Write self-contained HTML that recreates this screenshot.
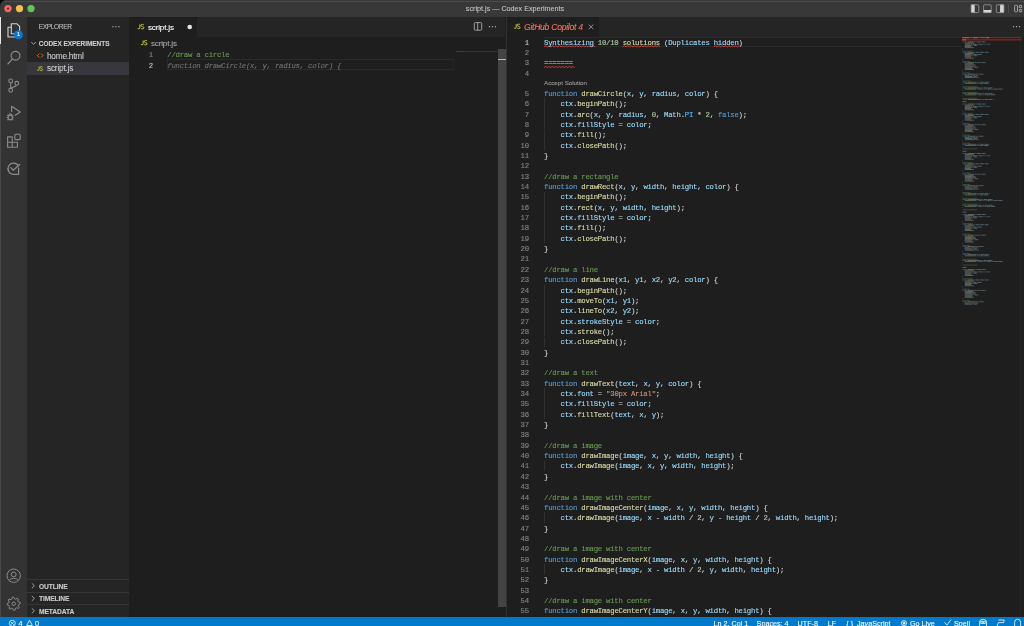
<!DOCTYPE html>
<html><head><meta charset="utf-8"><style>
*{margin:0;padding:0;box-sizing:border-box}
html,body{width:1024px;height:626px;overflow:hidden;background:#1e1e1e}
.a{position:absolute}
#bg,#fg,#ic{position:absolute;left:0;top:0;width:1024px;height:626px}
#fg{will-change:transform}
.t{position:absolute;white-space:pre;font-family:"Liberation Sans",sans-serif;line-height:9px;-webkit-text-stroke:0.1px}
.m{position:absolute;white-space:pre;font-family:"Liberation Mono",monospace;font-size:7.3px;letter-spacing:-0.24px;line-height:10.35px;color:#d4d4d4;-webkit-text-stroke:0.12px}
</style></head><body>
<div id="bg"><div class="a" style="left:0;top:0;width:7px;height:7px;background:#000"></div><div class="a" style="left:0px;top:0px;width:1024px;height:17px;background:#383838;border-top-left-radius:6px"></div><div class="a" style="left:3.5px;top:1px;width:1020.5px;height:1px;background:#4b4b4b;"></div><div class="a" style="left:0px;top:17px;width:27.2px;height:600px;background:#333333;"></div><div class="a" style="left:0px;top:17px;width:1px;height:600px;background:#484848;"></div><div class="a" style="left:0px;top:17.3px;width:1.4px;height:27px;background:#e8e8e8;"></div><div class="a" style="left:27.2px;top:17px;width:101.8px;height:600px;background:#252526;"></div><div class="a" style="left:27.2px;top:62.1px;width:101.8px;height:12.6px;background:#37373d;"></div><div class="a" style="left:27.2px;top:579.3px;width:101.8px;height:0.9px;background:#363636;"></div><div class="a" style="left:27.2px;top:591.9px;width:101.8px;height:0.9px;background:#363636;"></div><div class="a" style="left:27.2px;top:604.3px;width:101.8px;height:0.9px;background:#363636;"></div><div class="a" style="left:129px;top:17px;width:376px;height:19.5px;background:#252526;"></div><div class="a" style="left:129px;top:17px;width:68px;height:19.5px;background:#1e1e1e;"></div><div class="a" style="left:167.0px;top:59.45px;width:286.5px;height:10.549999999999999px;background:transparent;border:0.8px solid #2a2a2a;border-right-color:#242424"></div><div class="a" style="left:455.6px;top:50.5px;width:7.5px;height:0.8px;background:#34482f;"></div><div class="a" style="left:463.1px;top:50.5px;width:34.4px;height:0.8px;background:#2c353e;"></div><div class="a" style="left:497.8px;top:49.2px;width:8.1px;height:557.5px;background:#434343;"></div><div class="a" style="left:497.8px;top:59px;width:8.1px;height:0.8px;background:#b8b8b8;"></div><div class="a" style="left:505.9px;top:17px;width:1.1px;height:600px;background:#333333;"></div><div class="a" style="left:507px;top:17px;width:517px;height:20px;background:#252526;"></div><div class="a" style="left:507px;top:17px;width:92px;height:20px;background:#1e1e1e;"></div><div class="a" style="left:543.9px;top:98.45px;width:0.7px;height:10.35px;background:#303030;"></div><div class="a" style="left:543.9px;top:108.8px;width:0.7px;height:10.35px;background:#303030;"></div><div class="a" style="left:543.9px;top:119.15px;width:0.7px;height:10.35px;background:#303030;"></div><div class="a" style="left:543.9px;top:129.5px;width:0.7px;height:10.35px;background:#303030;"></div><div class="a" style="left:543.9px;top:139.85px;width:0.7px;height:10.35px;background:#303030;"></div><div class="a" style="left:543.9px;top:191.6px;width:0.7px;height:10.35px;background:#303030;"></div><div class="a" style="left:543.9px;top:201.95px;width:0.7px;height:10.35px;background:#303030;"></div><div class="a" style="left:543.9px;top:212.3px;width:0.7px;height:10.35px;background:#303030;"></div><div class="a" style="left:543.9px;top:222.65px;width:0.7px;height:10.35px;background:#303030;"></div><div class="a" style="left:543.9px;top:233.0px;width:0.7px;height:10.35px;background:#303030;"></div><div class="a" style="left:543.9px;top:284.75px;width:0.7px;height:10.35px;background:#303030;"></div><div class="a" style="left:543.9px;top:295.1px;width:0.7px;height:10.35px;background:#303030;"></div><div class="a" style="left:543.9px;top:305.45px;width:0.7px;height:10.35px;background:#303030;"></div><div class="a" style="left:543.9px;top:315.8px;width:0.7px;height:10.35px;background:#303030;"></div><div class="a" style="left:543.9px;top:326.15px;width:0.7px;height:10.35px;background:#303030;"></div><div class="a" style="left:543.9px;top:336.5px;width:0.7px;height:10.35px;background:#303030;"></div><div class="a" style="left:543.9px;top:388.25px;width:0.7px;height:10.35px;background:#303030;"></div><div class="a" style="left:543.9px;top:398.6px;width:0.7px;height:10.35px;background:#303030;"></div><div class="a" style="left:543.9px;top:408.95px;width:0.7px;height:10.35px;background:#303030;"></div><div class="a" style="left:543.9px;top:460.7px;width:0.7px;height:10.35px;background:#303030;"></div><div class="a" style="left:543.9px;top:512.45px;width:0.7px;height:10.35px;background:#303030;"></div><div class="a" style="left:543.9px;top:564.2px;width:0.7px;height:10.35px;background:#303030;"></div><div class="a" style="left:544px;top:36.8px;width:418px;height:9.75px;background:transparent;border-top:0.8px solid #2a2a2a;border-bottom:0.8px solid #2a2a2a"></div><div class="a" style="left:1020.3px;top:37px;width:0.7px;height:580px;background:#242424;"></div><div class="a" style="left:0px;top:617px;width:1024px;height:9px;background:#007acc;"></div></div>
<svg id="ic" width="1024" height="626" viewBox="0 0 1024 626"><circle cx="8" cy="8.6" r="3.65" fill="#ee6a5f"/><circle cx="19.5" cy="8.6" r="3.65" fill="#f5be4f"/><circle cx="31" cy="8.6" r="3.65" fill="#61c454"/><circle cx="8" cy="8.6" r="1.1" fill="#8c1c14"/><rect x="971.1" y="4.6" width="3.6" height="8.1" fill="#d6d6d6"/><rect x="983.4" y="10" width="7.9" height="2.7" fill="#d6d6d6"/><rect x="1000.1" y="4.6" width="3.8" height="8.1" fill="#d6d6d6"/><g fill="none" stroke="#9c9c9c" stroke-width="0.8"><rect x="971.2" y="4.8" width="7.6" height="7.8" rx="1"/><rect x="983.6" y="4.8" width="7.6" height="7.8" rx="1"/><rect x="996.3" y="4.8" width="7.6" height="7.8" rx="1"/></g><rect x="1008.2" y="4.3" width="0.7" height="8.8" fill="#555"/><g fill="none" stroke="#b8b8b8" stroke-width="0.85"><rect x="1014.6" y="5.3" width="2.9" height="6.4" rx="0.9"/><rect x="1019.3" y="5.4" width="2.4" height="2.3" rx="0.3"/><rect x="1019.3" y="9.5" width="2.4" height="2.3" rx="0.3"/></g><g fill="none" stroke="#d4d4d4" stroke-width="1.1" stroke-linejoin="round"><path d="M11.2 27.3 H8 V37 H15.5 V33.8"/><path d="M11.3 23.8 H17 L19.6 26.4 V33.8 H11.3 Z"/></g><circle cx="18.4" cy="34.8" r="4.5" fill="#0a78d0"/><g fill="none" stroke="#8b8b8b" stroke-width="1.15" stroke-linecap="round"><circle cx="15.5" cy="55.8" r="4.4"/><path d="M12.3 59.2 L7.9 64"/></g><g fill="none" stroke="#8b8b8b" stroke-width="1.1"><circle cx="10.7" cy="80.9" r="1.9"/><circle cx="16.8" cy="83.3" r="1.9"/><circle cx="10.7" cy="90.3" r="1.9"/><path d="M10.7 82.8 V88.4"/><path d="M16.4 85.2 C16 87 13 87 10.9 88"/></g><g fill="none" stroke="#8b8b8b" stroke-width="1.15" stroke-linejoin="round"><path d="M11.6 112 V106.3 L20.3 112.1 L14.8 115.6"/><ellipse cx="10.3" cy="117.5" rx="2.2" ry="2.4"/><path d="M9.1 114.9 A1.2 1.2 0 0 1 11.5 114.9"/><path d="M6.9 115.3 h1.3 M12.1 115.3 h1.3 M6.7 117.5 h1.5 M12.1 117.5 h1.5 M6.9 119.8 h1.3 M12.1 119.8 h1.3" stroke-width="0.9"/></g><g fill="none" stroke="#8b8b8b" stroke-width="1.1" stroke-linejoin="round"><path d="M7.6 136.9 H12.2 V142.2 H17.4 V147.3 H7.6 Z"/><path d="M7.6 142.2 H12.2 V147.3"/><rect x="14.8" y="134.3" width="5.4" height="5.3" rx="1"/></g><g fill="none" stroke="#8b8b8b" stroke-width="1.25" stroke-linejoin="round" stroke-linecap="round"><path d="M18.4 165.9 A5.6 5.6 0 1 0 13.25 174.3 H18.6 V168.2"/><path d="M10.8 167.6 L13.2 170.3 L19.7 164.5"/></g><g fill="none" stroke="#8b8b8b" stroke-width="1.0"><circle cx="13.7" cy="575.7" r="6.7"/><circle cx="13.7" cy="574.4" r="2.4"/><path d="M9.2 580.6 C10.3 577.6 17.1 577.6 18.2 580.6"/></g><g fill="none" stroke="#8b8b8b" stroke-width="1.0" stroke-linejoin="round"><path d="M20.17 602.41 L20.30 603.70 L18.51 604.66 L18.23 605.58 L19.19 607.37 L18.37 608.37 L16.42 607.77 L15.58 608.23 L14.99 610.17 L13.70 610.30 L12.74 608.51 L11.82 608.23 L10.03 609.19 L9.03 608.37 L9.63 606.42 L9.17 605.58 L7.23 604.99 L7.10 603.70 L8.89 602.74 L9.17 601.82 L8.21 600.03 L9.03 599.03 L10.98 599.63 L11.82 599.17 L12.41 597.23 L13.70 597.10 L14.66 598.89 L15.58 599.17 L17.37 598.21 L18.37 599.03 L17.77 600.98 L18.23 601.82 Z"/><circle cx="13.7" cy="603.7" r="1.7"/></g><g fill="#c0c0c0"><circle cx="112.9" cy="26.7" r="0.65"/><circle cx="115.9" cy="26.7" r="0.65"/><circle cx="118.9" cy="26.7" r="0.65"/></g><path d="M31.3 42 L33.6 44.4 L35.9 42" fill="none" stroke="#bbbbbb" stroke-width="0.8"/><path d="M39.3 53.7 L37.4 55.6 L39.3 57.5 M41.1 53.7 L43.0 55.6 L41.1 57.5" fill="none" stroke="#e37933" stroke-width="0.9"/><g transform="translate(37.0,66.4) scale(0.88)" fill="none" stroke="#cbcb41" stroke-width="1.0" stroke-linecap="butt"><path d="M2.4 0.2 V3.5 Q2.4 4.6 1.25 4.6 Q0.4 4.6 0.1 3.8"/><path d="M6.3 0.7 Q5.7 0.1 4.9 0.1 Q3.6 0.1 3.6 1.25 Q3.6 2.1 4.9 2.4 Q6.4 2.7 6.4 3.6 Q6.4 4.7 4.9 4.7 Q3.9 4.7 3.4 4.0"/></g><path d="M31.8 583.3 L34.4 585.8 L31.8 588.3" fill="none" stroke="#bbbbbb" stroke-width="0.8"/><path d="M31.8 595.9 L34.4 598.4 L31.8 600.9" fill="none" stroke="#bbbbbb" stroke-width="0.8"/><path d="M31.8 608.3 L34.4 610.8 L31.8 613.3" fill="none" stroke="#bbbbbb" stroke-width="0.8"/><g transform="translate(137.5,24.2) scale(1.0)" fill="none" stroke="#cbcb41" stroke-width="1.0" stroke-linecap="butt"><path d="M2.4 0.2 V3.5 Q2.4 4.6 1.25 4.6 Q0.4 4.6 0.1 3.8"/><path d="M6.3 0.7 Q5.7 0.1 4.9 0.1 Q3.6 0.1 3.6 1.25 Q3.6 2.1 4.9 2.4 Q6.4 2.7 6.4 3.6 Q6.4 4.7 4.9 4.7 Q3.9 4.7 3.4 4.0"/></g><circle cx="189.7" cy="27" r="2.3" fill="#e6e6e6"/><g fill="none" stroke="#b0b0b0" stroke-width="0.85"><rect x="474.3" y="22.6" width="7.4" height="7.6" rx="1"/><path d="M477.7 22.6 V30.2"/></g><g fill="#c0c0c0"><circle cx="489.4" cy="26.7" r="0.65"/><circle cx="492.4" cy="26.7" r="0.65"/><circle cx="495.4" cy="26.7" r="0.65"/></g><g transform="translate(140.8,40.3) scale(0.98)" fill="none" stroke="#cbcb41" stroke-width="1.0" stroke-linecap="butt"><path d="M2.4 0.2 V3.5 Q2.4 4.6 1.25 4.6 Q0.4 4.6 0.1 3.8"/><path d="M6.3 0.7 Q5.7 0.1 4.9 0.1 Q3.6 0.1 3.6 1.25 Q3.6 2.1 4.9 2.4 Q6.4 2.7 6.4 3.6 Q6.4 4.7 4.9 4.7 Q3.9 4.7 3.4 4.0"/></g><g transform="translate(513.9,24.0) scale(0.96)" fill="none" stroke="#cbcb41" stroke-width="1.0" stroke-linecap="butt"><path d="M2.4 0.2 V3.5 Q2.4 4.6 1.25 4.6 Q0.4 4.6 0.1 3.8"/><path d="M6.3 0.7 Q5.7 0.1 4.9 0.1 Q3.6 0.1 3.6 1.25 Q3.6 2.1 4.9 2.4 Q6.4 2.7 6.4 3.6 Q6.4 4.7 4.9 4.7 Q3.9 4.7 3.4 4.0"/></g><path d="M588.6 24.5 L593.4 29.2 M593.4 24.5 L588.6 29.2" stroke="#a8a8a8" stroke-width="0.8"/><g fill="#c0c0c0"><circle cx="1013.6" cy="26.7" r="0.65"/><circle cx="1016.6" cy="26.7" r="0.65"/><circle cx="1019.6" cy="26.7" r="0.65"/></g><path d="M544.00 46.90 L545.70 45.70 L547.40 46.90 L549.10 45.70 L550.80 46.90 L552.50 45.70 L554.20 46.90 L555.90 45.70 L557.60 46.90 L559.30 45.70 L561.00 46.90 L562.70 45.70 L564.40 46.90 L566.10 45.70 L567.80 46.90 L569.50 45.70 L571.20 46.90 L572.90 45.70 L574.60 46.90 L576.30 45.70 L578.00 46.90 L579.70 45.70 L581.40 46.90 L583.10 45.70 L584.80 46.90 L586.50 45.70 L588.20 46.90 L589.90 45.70 L591.60 46.90 L593.30 45.70 L595.00 46.90" stroke="#d8443e" stroke-width="0.9" fill="none"/><path d="M622.66 46.90 L624.36 45.70 L626.06 46.90 L627.76 45.70 L629.46 46.90 L631.16 45.70 L632.86 46.90 L634.56 45.70 L636.26 46.90 L637.96 45.70 L639.66 46.90 L641.36 45.70 L643.06 46.90 L644.76 45.70 L646.46 46.90 L648.16 45.70 L649.86 46.90 L651.56 45.70 L653.26 46.90 L654.96 45.70 L656.66 46.90 L658.36 45.70 L660.06 46.90" stroke="#d8443e" stroke-width="0.9" fill="none"/><path d="M713.74 46.90 L715.44 45.70 L717.14 46.90 L718.84 45.70 L720.54 46.90 L722.24 45.70 L723.94 46.90 L725.64 45.70 L727.34 46.90 L729.04 45.70 L730.74 46.90 L732.44 45.70 L734.14 46.90 L735.84 45.70 L737.54 46.90 L739.24 45.70" stroke="#d8443e" stroke-width="0.9" fill="none"/><path d="M544.00 67.60 L545.70 66.40 L547.40 67.60 L549.10 66.40 L550.80 67.60 L552.50 66.40 L554.20 67.60 L555.90 66.40 L557.60 67.60 L559.30 66.40 L561.00 67.60 L562.70 66.40 L564.40 67.60 L566.10 66.40 L567.80 67.60 L569.50 66.40 L571.20 67.60 L572.90 66.40 L574.60 67.60" stroke="#d8443e" stroke-width="0.9" fill="none"/><rect x="962" y="36.9" width="59.6" height="1.4" fill="#7d2420"/><rect x="962" y="39.1" width="59.6" height="1.4" fill="#7d2420"/><rect x="962.3" y="37" width="6.8" height="1.2" fill="#d0463e"/><rect x="972.8" y="37" width="5.2" height="1.2" fill="#d0463e"/><rect x="985.8" y="37" width="3.4" height="1.2" fill="#d0463e"/><rect x="962.3" y="39.2" width="3.9" height="1.2" fill="#d0463e"/><rect x="969.6" y="37.2" width="2.6" height="0.8" fill="#a08070" opacity="0.5"/><rect x="979.2" y="37.2" width="5.8" height="0.8" fill="#a09090" opacity="0.5"/><rect x="962.50" y="41.50" width="4.52" height="0.85" fill="#569cd6" opacity="0.42"/><rect x="967.59" y="41.50" width="5.65" height="0.85" fill="#dcdcaa" opacity="0.42"/><rect x="973.24" y="41.50" width="0.56" height="0.85" fill="#d4d4d4" opacity="0.42"/><rect x="973.80" y="41.50" width="0.56" height="0.85" fill="#9cdcfe" opacity="0.42"/><rect x="974.37" y="41.50" width="0.56" height="0.85" fill="#d4d4d4" opacity="0.42"/><rect x="975.50" y="41.50" width="0.56" height="0.85" fill="#9cdcfe" opacity="0.42"/><rect x="976.06" y="41.50" width="0.56" height="0.85" fill="#d4d4d4" opacity="0.42"/><rect x="977.19" y="41.50" width="3.39" height="0.85" fill="#9cdcfe" opacity="0.42"/><rect x="980.58" y="41.50" width="0.56" height="0.85" fill="#d4d4d4" opacity="0.42"/><rect x="981.71" y="41.50" width="2.82" height="0.85" fill="#9cdcfe" opacity="0.42"/><rect x="984.54" y="41.50" width="0.56" height="0.85" fill="#d4d4d4" opacity="0.42"/><rect x="985.67" y="41.50" width="0.56" height="0.85" fill="#d4d4d4" opacity="0.42"/><rect x="964.76" y="42.65" width="1.69" height="0.85" fill="#9cdcfe" opacity="0.42"/><rect x="966.46" y="42.65" width="0.56" height="0.85" fill="#d4d4d4" opacity="0.42"/><rect x="967.02" y="42.65" width="5.08" height="0.85" fill="#dcdcaa" opacity="0.42"/><rect x="972.11" y="42.65" width="0.56" height="0.85" fill="#d4d4d4" opacity="0.42"/><rect x="972.67" y="42.65" width="0.56" height="0.85" fill="#d4d4d4" opacity="0.42"/><rect x="973.24" y="42.65" width="0.56" height="0.85" fill="#d4d4d4" opacity="0.42"/><rect x="964.76" y="43.80" width="1.69" height="0.85" fill="#9cdcfe" opacity="0.42"/><rect x="966.46" y="43.80" width="0.56" height="0.85" fill="#d4d4d4" opacity="0.42"/><rect x="967.02" y="43.80" width="1.69" height="0.85" fill="#dcdcaa" opacity="0.42"/><rect x="968.72" y="43.80" width="0.56" height="0.85" fill="#d4d4d4" opacity="0.42"/><rect x="969.28" y="43.80" width="0.56" height="0.85" fill="#9cdcfe" opacity="0.42"/><rect x="969.85" y="43.80" width="0.56" height="0.85" fill="#d4d4d4" opacity="0.42"/><rect x="970.98" y="43.80" width="0.56" height="0.85" fill="#9cdcfe" opacity="0.42"/><rect x="971.54" y="43.80" width="0.56" height="0.85" fill="#d4d4d4" opacity="0.42"/><rect x="972.67" y="43.80" width="3.39" height="0.85" fill="#9cdcfe" opacity="0.42"/><rect x="976.06" y="43.80" width="0.56" height="0.85" fill="#d4d4d4" opacity="0.42"/><rect x="977.19" y="43.80" width="0.56" height="0.85" fill="#b5cea8" opacity="0.42"/><rect x="977.76" y="43.80" width="0.56" height="0.85" fill="#d4d4d4" opacity="0.42"/><rect x="978.89" y="43.80" width="2.26" height="0.85" fill="#9cdcfe" opacity="0.42"/><rect x="981.15" y="43.80" width="0.56" height="0.85" fill="#d4d4d4" opacity="0.42"/><rect x="981.71" y="43.80" width="1.13" height="0.85" fill="#4fc1ff" opacity="0.42"/><rect x="983.41" y="43.80" width="0.56" height="0.85" fill="#d4d4d4" opacity="0.42"/><rect x="984.54" y="43.80" width="0.56" height="0.85" fill="#b5cea8" opacity="0.42"/><rect x="985.10" y="43.80" width="0.56" height="0.85" fill="#d4d4d4" opacity="0.42"/><rect x="986.23" y="43.80" width="2.82" height="0.85" fill="#569cd6" opacity="0.42"/><rect x="989.06" y="43.80" width="0.56" height="0.85" fill="#d4d4d4" opacity="0.42"/><rect x="989.62" y="43.80" width="0.56" height="0.85" fill="#d4d4d4" opacity="0.42"/><rect x="964.76" y="44.95" width="1.69" height="0.85" fill="#9cdcfe" opacity="0.42"/><rect x="966.46" y="44.95" width="0.56" height="0.85" fill="#d4d4d4" opacity="0.42"/><rect x="967.02" y="44.95" width="5.08" height="0.85" fill="#9cdcfe" opacity="0.42"/><rect x="972.67" y="44.95" width="0.56" height="0.85" fill="#d4d4d4" opacity="0.42"/><rect x="973.80" y="44.95" width="2.82" height="0.85" fill="#9cdcfe" opacity="0.42"/><rect x="976.63" y="44.95" width="0.56" height="0.85" fill="#d4d4d4" opacity="0.42"/><rect x="964.76" y="46.10" width="1.69" height="0.85" fill="#9cdcfe" opacity="0.42"/><rect x="966.46" y="46.10" width="0.56" height="0.85" fill="#d4d4d4" opacity="0.42"/><rect x="967.02" y="46.10" width="2.26" height="0.85" fill="#dcdcaa" opacity="0.42"/><rect x="969.28" y="46.10" width="0.56" height="0.85" fill="#d4d4d4" opacity="0.42"/><rect x="969.85" y="46.10" width="0.56" height="0.85" fill="#d4d4d4" opacity="0.42"/><rect x="970.41" y="46.10" width="0.56" height="0.85" fill="#d4d4d4" opacity="0.42"/><rect x="964.76" y="47.25" width="1.69" height="0.85" fill="#9cdcfe" opacity="0.42"/><rect x="966.46" y="47.25" width="0.56" height="0.85" fill="#d4d4d4" opacity="0.42"/><rect x="967.02" y="47.25" width="5.08" height="0.85" fill="#dcdcaa" opacity="0.42"/><rect x="972.11" y="47.25" width="0.56" height="0.85" fill="#d4d4d4" opacity="0.42"/><rect x="972.67" y="47.25" width="0.56" height="0.85" fill="#d4d4d4" opacity="0.42"/><rect x="973.24" y="47.25" width="0.56" height="0.85" fill="#d4d4d4" opacity="0.42"/><rect x="962.50" y="48.40" width="0.56" height="0.85" fill="#d4d4d4" opacity="0.42"/><rect x="962.50" y="50.70" width="10.17" height="0.85" fill="#6a9955" opacity="0.42"/><rect x="962.50" y="51.85" width="4.52" height="0.85" fill="#569cd6" opacity="0.42"/><rect x="967.59" y="51.85" width="4.52" height="0.85" fill="#dcdcaa" opacity="0.42"/><rect x="972.11" y="51.85" width="0.56" height="0.85" fill="#d4d4d4" opacity="0.42"/><rect x="972.67" y="51.85" width="0.56" height="0.85" fill="#9cdcfe" opacity="0.42"/><rect x="973.24" y="51.85" width="0.56" height="0.85" fill="#d4d4d4" opacity="0.42"/><rect x="974.37" y="51.85" width="0.56" height="0.85" fill="#9cdcfe" opacity="0.42"/><rect x="974.93" y="51.85" width="0.56" height="0.85" fill="#d4d4d4" opacity="0.42"/><rect x="976.06" y="51.85" width="2.82" height="0.85" fill="#9cdcfe" opacity="0.42"/><rect x="978.89" y="51.85" width="0.56" height="0.85" fill="#d4d4d4" opacity="0.42"/><rect x="980.02" y="51.85" width="3.39" height="0.85" fill="#9cdcfe" opacity="0.42"/><rect x="983.41" y="51.85" width="0.56" height="0.85" fill="#d4d4d4" opacity="0.42"/><rect x="984.54" y="51.85" width="2.82" height="0.85" fill="#9cdcfe" opacity="0.42"/><rect x="987.36" y="51.85" width="0.56" height="0.85" fill="#d4d4d4" opacity="0.42"/><rect x="988.49" y="51.85" width="0.56" height="0.85" fill="#d4d4d4" opacity="0.42"/><rect x="964.76" y="53.00" width="1.69" height="0.85" fill="#9cdcfe" opacity="0.42"/><rect x="966.46" y="53.00" width="0.56" height="0.85" fill="#d4d4d4" opacity="0.42"/><rect x="967.02" y="53.00" width="5.08" height="0.85" fill="#dcdcaa" opacity="0.42"/><rect x="972.11" y="53.00" width="0.56" height="0.85" fill="#d4d4d4" opacity="0.42"/><rect x="972.67" y="53.00" width="0.56" height="0.85" fill="#d4d4d4" opacity="0.42"/><rect x="973.24" y="53.00" width="0.56" height="0.85" fill="#d4d4d4" opacity="0.42"/><rect x="964.76" y="54.15" width="1.69" height="0.85" fill="#9cdcfe" opacity="0.42"/><rect x="966.46" y="54.15" width="0.56" height="0.85" fill="#d4d4d4" opacity="0.42"/><rect x="967.02" y="54.15" width="2.26" height="0.85" fill="#dcdcaa" opacity="0.42"/><rect x="969.28" y="54.15" width="0.56" height="0.85" fill="#d4d4d4" opacity="0.42"/><rect x="969.85" y="54.15" width="0.56" height="0.85" fill="#9cdcfe" opacity="0.42"/><rect x="970.41" y="54.15" width="0.56" height="0.85" fill="#d4d4d4" opacity="0.42"/><rect x="971.54" y="54.15" width="0.56" height="0.85" fill="#9cdcfe" opacity="0.42"/><rect x="972.11" y="54.15" width="0.56" height="0.85" fill="#d4d4d4" opacity="0.42"/><rect x="973.24" y="54.15" width="2.82" height="0.85" fill="#9cdcfe" opacity="0.42"/><rect x="976.06" y="54.15" width="0.56" height="0.85" fill="#d4d4d4" opacity="0.42"/><rect x="977.19" y="54.15" width="3.39" height="0.85" fill="#9cdcfe" opacity="0.42"/><rect x="980.58" y="54.15" width="0.56" height="0.85" fill="#d4d4d4" opacity="0.42"/><rect x="981.15" y="54.15" width="0.56" height="0.85" fill="#d4d4d4" opacity="0.42"/><rect x="964.76" y="55.30" width="1.69" height="0.85" fill="#9cdcfe" opacity="0.42"/><rect x="966.46" y="55.30" width="0.56" height="0.85" fill="#d4d4d4" opacity="0.42"/><rect x="967.02" y="55.30" width="5.08" height="0.85" fill="#9cdcfe" opacity="0.42"/><rect x="972.67" y="55.30" width="0.56" height="0.85" fill="#d4d4d4" opacity="0.42"/><rect x="973.80" y="55.30" width="2.82" height="0.85" fill="#9cdcfe" opacity="0.42"/><rect x="976.63" y="55.30" width="0.56" height="0.85" fill="#d4d4d4" opacity="0.42"/><rect x="964.76" y="56.45" width="1.69" height="0.85" fill="#9cdcfe" opacity="0.42"/><rect x="966.46" y="56.45" width="0.56" height="0.85" fill="#d4d4d4" opacity="0.42"/><rect x="967.02" y="56.45" width="2.26" height="0.85" fill="#dcdcaa" opacity="0.42"/><rect x="969.28" y="56.45" width="0.56" height="0.85" fill="#d4d4d4" opacity="0.42"/><rect x="969.85" y="56.45" width="0.56" height="0.85" fill="#d4d4d4" opacity="0.42"/><rect x="970.41" y="56.45" width="0.56" height="0.85" fill="#d4d4d4" opacity="0.42"/><rect x="964.76" y="57.60" width="1.69" height="0.85" fill="#9cdcfe" opacity="0.42"/><rect x="966.46" y="57.60" width="0.56" height="0.85" fill="#d4d4d4" opacity="0.42"/><rect x="967.02" y="57.60" width="5.08" height="0.85" fill="#dcdcaa" opacity="0.42"/><rect x="972.11" y="57.60" width="0.56" height="0.85" fill="#d4d4d4" opacity="0.42"/><rect x="972.67" y="57.60" width="0.56" height="0.85" fill="#d4d4d4" opacity="0.42"/><rect x="973.24" y="57.60" width="0.56" height="0.85" fill="#d4d4d4" opacity="0.42"/><rect x="962.50" y="58.75" width="0.56" height="0.85" fill="#d4d4d4" opacity="0.42"/><rect x="962.50" y="61.05" width="7.34" height="0.85" fill="#6a9955" opacity="0.42"/><rect x="962.50" y="62.20" width="4.52" height="0.85" fill="#569cd6" opacity="0.42"/><rect x="967.59" y="62.20" width="4.52" height="0.85" fill="#dcdcaa" opacity="0.42"/><rect x="972.11" y="62.20" width="0.56" height="0.85" fill="#d4d4d4" opacity="0.42"/><rect x="972.67" y="62.20" width="1.13" height="0.85" fill="#9cdcfe" opacity="0.42"/><rect x="973.80" y="62.20" width="0.56" height="0.85" fill="#d4d4d4" opacity="0.42"/><rect x="974.93" y="62.20" width="1.13" height="0.85" fill="#9cdcfe" opacity="0.42"/><rect x="976.06" y="62.20" width="0.56" height="0.85" fill="#d4d4d4" opacity="0.42"/><rect x="977.19" y="62.20" width="1.13" height="0.85" fill="#9cdcfe" opacity="0.42"/><rect x="978.32" y="62.20" width="0.56" height="0.85" fill="#d4d4d4" opacity="0.42"/><rect x="979.45" y="62.20" width="1.13" height="0.85" fill="#9cdcfe" opacity="0.42"/><rect x="980.58" y="62.20" width="0.56" height="0.85" fill="#d4d4d4" opacity="0.42"/><rect x="981.71" y="62.20" width="2.82" height="0.85" fill="#9cdcfe" opacity="0.42"/><rect x="984.54" y="62.20" width="0.56" height="0.85" fill="#d4d4d4" opacity="0.42"/><rect x="985.67" y="62.20" width="0.56" height="0.85" fill="#d4d4d4" opacity="0.42"/><rect x="964.76" y="63.35" width="1.69" height="0.85" fill="#9cdcfe" opacity="0.42"/><rect x="966.46" y="63.35" width="0.56" height="0.85" fill="#d4d4d4" opacity="0.42"/><rect x="967.02" y="63.35" width="5.08" height="0.85" fill="#dcdcaa" opacity="0.42"/><rect x="972.11" y="63.35" width="0.56" height="0.85" fill="#d4d4d4" opacity="0.42"/><rect x="972.67" y="63.35" width="0.56" height="0.85" fill="#d4d4d4" opacity="0.42"/><rect x="973.24" y="63.35" width="0.56" height="0.85" fill="#d4d4d4" opacity="0.42"/><rect x="964.76" y="64.50" width="1.69" height="0.85" fill="#9cdcfe" opacity="0.42"/><rect x="966.46" y="64.50" width="0.56" height="0.85" fill="#d4d4d4" opacity="0.42"/><rect x="967.02" y="64.50" width="3.39" height="0.85" fill="#dcdcaa" opacity="0.42"/><rect x="970.41" y="64.50" width="0.56" height="0.85" fill="#d4d4d4" opacity="0.42"/><rect x="970.98" y="64.50" width="1.13" height="0.85" fill="#9cdcfe" opacity="0.42"/><rect x="972.11" y="64.50" width="0.56" height="0.85" fill="#d4d4d4" opacity="0.42"/><rect x="973.24" y="64.50" width="1.13" height="0.85" fill="#9cdcfe" opacity="0.42"/><rect x="974.37" y="64.50" width="0.56" height="0.85" fill="#d4d4d4" opacity="0.42"/><rect x="974.93" y="64.50" width="0.56" height="0.85" fill="#d4d4d4" opacity="0.42"/><rect x="964.76" y="65.65" width="1.69" height="0.85" fill="#9cdcfe" opacity="0.42"/><rect x="966.46" y="65.65" width="0.56" height="0.85" fill="#d4d4d4" opacity="0.42"/><rect x="967.02" y="65.65" width="3.39" height="0.85" fill="#dcdcaa" opacity="0.42"/><rect x="970.41" y="65.65" width="0.56" height="0.85" fill="#d4d4d4" opacity="0.42"/><rect x="970.98" y="65.65" width="1.13" height="0.85" fill="#9cdcfe" opacity="0.42"/><rect x="972.11" y="65.65" width="0.56" height="0.85" fill="#d4d4d4" opacity="0.42"/><rect x="973.24" y="65.65" width="1.13" height="0.85" fill="#9cdcfe" opacity="0.42"/><rect x="974.37" y="65.65" width="0.56" height="0.85" fill="#d4d4d4" opacity="0.42"/><rect x="974.93" y="65.65" width="0.56" height="0.85" fill="#d4d4d4" opacity="0.42"/><rect x="964.76" y="66.80" width="1.69" height="0.85" fill="#9cdcfe" opacity="0.42"/><rect x="966.46" y="66.80" width="0.56" height="0.85" fill="#d4d4d4" opacity="0.42"/><rect x="967.02" y="66.80" width="6.21" height="0.85" fill="#9cdcfe" opacity="0.42"/><rect x="973.80" y="66.80" width="0.56" height="0.85" fill="#d4d4d4" opacity="0.42"/><rect x="974.93" y="66.80" width="2.82" height="0.85" fill="#9cdcfe" opacity="0.42"/><rect x="977.76" y="66.80" width="0.56" height="0.85" fill="#d4d4d4" opacity="0.42"/><rect x="964.76" y="67.95" width="1.69" height="0.85" fill="#9cdcfe" opacity="0.42"/><rect x="966.46" y="67.95" width="0.56" height="0.85" fill="#d4d4d4" opacity="0.42"/><rect x="967.02" y="67.95" width="3.39" height="0.85" fill="#dcdcaa" opacity="0.42"/><rect x="970.41" y="67.95" width="0.56" height="0.85" fill="#d4d4d4" opacity="0.42"/><rect x="970.98" y="67.95" width="0.56" height="0.85" fill="#d4d4d4" opacity="0.42"/><rect x="971.54" y="67.95" width="0.56" height="0.85" fill="#d4d4d4" opacity="0.42"/><rect x="964.76" y="69.10" width="1.69" height="0.85" fill="#9cdcfe" opacity="0.42"/><rect x="966.46" y="69.10" width="0.56" height="0.85" fill="#d4d4d4" opacity="0.42"/><rect x="967.02" y="69.10" width="5.08" height="0.85" fill="#dcdcaa" opacity="0.42"/><rect x="972.11" y="69.10" width="0.56" height="0.85" fill="#d4d4d4" opacity="0.42"/><rect x="972.67" y="69.10" width="0.56" height="0.85" fill="#d4d4d4" opacity="0.42"/><rect x="973.24" y="69.10" width="0.56" height="0.85" fill="#d4d4d4" opacity="0.42"/><rect x="962.50" y="70.25" width="0.56" height="0.85" fill="#d4d4d4" opacity="0.42"/><rect x="962.50" y="72.55" width="7.34" height="0.85" fill="#6a9955" opacity="0.42"/><rect x="962.50" y="73.70" width="4.52" height="0.85" fill="#569cd6" opacity="0.42"/><rect x="967.59" y="73.70" width="4.52" height="0.85" fill="#dcdcaa" opacity="0.42"/><rect x="972.11" y="73.70" width="0.56" height="0.85" fill="#d4d4d4" opacity="0.42"/><rect x="972.67" y="73.70" width="2.26" height="0.85" fill="#9cdcfe" opacity="0.42"/><rect x="974.93" y="73.70" width="0.56" height="0.85" fill="#d4d4d4" opacity="0.42"/><rect x="976.06" y="73.70" width="0.56" height="0.85" fill="#9cdcfe" opacity="0.42"/><rect x="976.63" y="73.70" width="0.56" height="0.85" fill="#d4d4d4" opacity="0.42"/><rect x="977.76" y="73.70" width="0.56" height="0.85" fill="#9cdcfe" opacity="0.42"/><rect x="978.32" y="73.70" width="0.56" height="0.85" fill="#d4d4d4" opacity="0.42"/><rect x="979.45" y="73.70" width="2.82" height="0.85" fill="#9cdcfe" opacity="0.42"/><rect x="982.28" y="73.70" width="0.56" height="0.85" fill="#d4d4d4" opacity="0.42"/><rect x="983.41" y="73.70" width="0.56" height="0.85" fill="#d4d4d4" opacity="0.42"/><rect x="964.76" y="74.85" width="1.69" height="0.85" fill="#9cdcfe" opacity="0.42"/><rect x="966.46" y="74.85" width="0.56" height="0.85" fill="#d4d4d4" opacity="0.42"/><rect x="967.02" y="74.85" width="2.26" height="0.85" fill="#9cdcfe" opacity="0.42"/><rect x="969.85" y="74.85" width="0.56" height="0.85" fill="#d4d4d4" opacity="0.42"/><rect x="970.98" y="74.85" width="6.78" height="0.85" fill="#ce9178" opacity="0.42"/><rect x="977.76" y="74.85" width="0.56" height="0.85" fill="#d4d4d4" opacity="0.42"/><rect x="964.76" y="76.00" width="1.69" height="0.85" fill="#9cdcfe" opacity="0.42"/><rect x="966.46" y="76.00" width="0.56" height="0.85" fill="#d4d4d4" opacity="0.42"/><rect x="967.02" y="76.00" width="5.08" height="0.85" fill="#9cdcfe" opacity="0.42"/><rect x="972.67" y="76.00" width="0.56" height="0.85" fill="#d4d4d4" opacity="0.42"/><rect x="973.80" y="76.00" width="2.82" height="0.85" fill="#9cdcfe" opacity="0.42"/><rect x="976.63" y="76.00" width="0.56" height="0.85" fill="#d4d4d4" opacity="0.42"/><rect x="964.76" y="77.15" width="1.69" height="0.85" fill="#9cdcfe" opacity="0.42"/><rect x="966.46" y="77.15" width="0.56" height="0.85" fill="#d4d4d4" opacity="0.42"/><rect x="967.02" y="77.15" width="4.52" height="0.85" fill="#dcdcaa" opacity="0.42"/><rect x="971.54" y="77.15" width="0.56" height="0.85" fill="#d4d4d4" opacity="0.42"/><rect x="972.11" y="77.15" width="2.26" height="0.85" fill="#9cdcfe" opacity="0.42"/><rect x="974.37" y="77.15" width="0.56" height="0.85" fill="#d4d4d4" opacity="0.42"/><rect x="975.50" y="77.15" width="0.56" height="0.85" fill="#9cdcfe" opacity="0.42"/><rect x="976.06" y="77.15" width="0.56" height="0.85" fill="#d4d4d4" opacity="0.42"/><rect x="977.19" y="77.15" width="0.56" height="0.85" fill="#9cdcfe" opacity="0.42"/><rect x="977.76" y="77.15" width="0.56" height="0.85" fill="#d4d4d4" opacity="0.42"/><rect x="978.32" y="77.15" width="0.56" height="0.85" fill="#d4d4d4" opacity="0.42"/><rect x="962.50" y="78.30" width="0.56" height="0.85" fill="#d4d4d4" opacity="0.42"/><rect x="962.50" y="80.60" width="7.91" height="0.85" fill="#6a9955" opacity="0.42"/><rect x="962.50" y="81.75" width="4.52" height="0.85" fill="#569cd6" opacity="0.42"/><rect x="967.59" y="81.75" width="5.08" height="0.85" fill="#dcdcaa" opacity="0.42"/><rect x="972.67" y="81.75" width="0.56" height="0.85" fill="#d4d4d4" opacity="0.42"/><rect x="973.24" y="81.75" width="2.82" height="0.85" fill="#9cdcfe" opacity="0.42"/><rect x="976.06" y="81.75" width="0.56" height="0.85" fill="#d4d4d4" opacity="0.42"/><rect x="977.19" y="81.75" width="0.56" height="0.85" fill="#9cdcfe" opacity="0.42"/><rect x="977.76" y="81.75" width="0.56" height="0.85" fill="#d4d4d4" opacity="0.42"/><rect x="978.89" y="81.75" width="0.56" height="0.85" fill="#9cdcfe" opacity="0.42"/><rect x="979.45" y="81.75" width="0.56" height="0.85" fill="#d4d4d4" opacity="0.42"/><rect x="980.58" y="81.75" width="2.82" height="0.85" fill="#9cdcfe" opacity="0.42"/><rect x="983.41" y="81.75" width="0.56" height="0.85" fill="#d4d4d4" opacity="0.42"/><rect x="984.54" y="81.75" width="3.39" height="0.85" fill="#9cdcfe" opacity="0.42"/><rect x="987.93" y="81.75" width="0.56" height="0.85" fill="#d4d4d4" opacity="0.42"/><rect x="989.06" y="81.75" width="0.56" height="0.85" fill="#d4d4d4" opacity="0.42"/><rect x="964.76" y="82.90" width="1.69" height="0.85" fill="#9cdcfe" opacity="0.42"/><rect x="966.46" y="82.90" width="0.56" height="0.85" fill="#d4d4d4" opacity="0.42"/><rect x="967.02" y="82.90" width="5.08" height="0.85" fill="#dcdcaa" opacity="0.42"/><rect x="972.11" y="82.90" width="0.56" height="0.85" fill="#d4d4d4" opacity="0.42"/><rect x="972.67" y="82.90" width="2.82" height="0.85" fill="#9cdcfe" opacity="0.42"/><rect x="975.50" y="82.90" width="0.56" height="0.85" fill="#d4d4d4" opacity="0.42"/><rect x="976.63" y="82.90" width="0.56" height="0.85" fill="#9cdcfe" opacity="0.42"/><rect x="977.19" y="82.90" width="0.56" height="0.85" fill="#d4d4d4" opacity="0.42"/><rect x="978.32" y="82.90" width="0.56" height="0.85" fill="#9cdcfe" opacity="0.42"/><rect x="978.89" y="82.90" width="0.56" height="0.85" fill="#d4d4d4" opacity="0.42"/><rect x="980.02" y="82.90" width="2.82" height="0.85" fill="#9cdcfe" opacity="0.42"/><rect x="982.84" y="82.90" width="0.56" height="0.85" fill="#d4d4d4" opacity="0.42"/><rect x="983.97" y="82.90" width="3.39" height="0.85" fill="#9cdcfe" opacity="0.42"/><rect x="987.36" y="82.90" width="0.56" height="0.85" fill="#d4d4d4" opacity="0.42"/><rect x="987.93" y="82.90" width="0.56" height="0.85" fill="#d4d4d4" opacity="0.42"/><rect x="962.50" y="84.05" width="0.56" height="0.85" fill="#d4d4d4" opacity="0.42"/><rect x="962.50" y="86.35" width="14.69" height="0.85" fill="#6a9955" opacity="0.42"/><rect x="962.50" y="87.50" width="4.52" height="0.85" fill="#569cd6" opacity="0.42"/><rect x="967.59" y="87.50" width="8.47" height="0.85" fill="#dcdcaa" opacity="0.42"/><rect x="976.06" y="87.50" width="0.56" height="0.85" fill="#d4d4d4" opacity="0.42"/><rect x="976.63" y="87.50" width="2.82" height="0.85" fill="#9cdcfe" opacity="0.42"/><rect x="979.45" y="87.50" width="0.56" height="0.85" fill="#d4d4d4" opacity="0.42"/><rect x="980.58" y="87.50" width="0.56" height="0.85" fill="#9cdcfe" opacity="0.42"/><rect x="981.15" y="87.50" width="0.56" height="0.85" fill="#d4d4d4" opacity="0.42"/><rect x="982.28" y="87.50" width="0.56" height="0.85" fill="#9cdcfe" opacity="0.42"/><rect x="982.84" y="87.50" width="0.56" height="0.85" fill="#d4d4d4" opacity="0.42"/><rect x="983.97" y="87.50" width="2.82" height="0.85" fill="#9cdcfe" opacity="0.42"/><rect x="986.80" y="87.50" width="0.56" height="0.85" fill="#d4d4d4" opacity="0.42"/><rect x="987.93" y="87.50" width="3.39" height="0.85" fill="#9cdcfe" opacity="0.42"/><rect x="991.32" y="87.50" width="0.56" height="0.85" fill="#d4d4d4" opacity="0.42"/><rect x="992.45" y="87.50" width="0.56" height="0.85" fill="#d4d4d4" opacity="0.42"/><rect x="964.76" y="88.65" width="1.69" height="0.85" fill="#9cdcfe" opacity="0.42"/><rect x="966.46" y="88.65" width="0.56" height="0.85" fill="#d4d4d4" opacity="0.42"/><rect x="967.02" y="88.65" width="5.08" height="0.85" fill="#dcdcaa" opacity="0.42"/><rect x="972.11" y="88.65" width="0.56" height="0.85" fill="#d4d4d4" opacity="0.42"/><rect x="972.67" y="88.65" width="2.82" height="0.85" fill="#9cdcfe" opacity="0.42"/><rect x="975.50" y="88.65" width="0.56" height="0.85" fill="#d4d4d4" opacity="0.42"/><rect x="976.63" y="88.65" width="0.56" height="0.85" fill="#9cdcfe" opacity="0.42"/><rect x="977.76" y="88.65" width="0.56" height="0.85" fill="#d4d4d4" opacity="0.42"/><rect x="978.89" y="88.65" width="2.82" height="0.85" fill="#9cdcfe" opacity="0.42"/><rect x="982.28" y="88.65" width="0.56" height="0.85" fill="#d4d4d4" opacity="0.42"/><rect x="983.41" y="88.65" width="0.56" height="0.85" fill="#b5cea8" opacity="0.42"/><rect x="983.97" y="88.65" width="0.56" height="0.85" fill="#d4d4d4" opacity="0.42"/><rect x="985.10" y="88.65" width="0.56" height="0.85" fill="#9cdcfe" opacity="0.42"/><rect x="986.23" y="88.65" width="0.56" height="0.85" fill="#d4d4d4" opacity="0.42"/><rect x="987.36" y="88.65" width="3.39" height="0.85" fill="#9cdcfe" opacity="0.42"/><rect x="991.32" y="88.65" width="0.56" height="0.85" fill="#d4d4d4" opacity="0.42"/><rect x="992.45" y="88.65" width="0.56" height="0.85" fill="#b5cea8" opacity="0.42"/><rect x="993.01" y="88.65" width="0.56" height="0.85" fill="#d4d4d4" opacity="0.42"/><rect x="994.14" y="88.65" width="2.82" height="0.85" fill="#9cdcfe" opacity="0.42"/><rect x="996.97" y="88.65" width="0.56" height="0.85" fill="#d4d4d4" opacity="0.42"/><rect x="998.10" y="88.65" width="3.39" height="0.85" fill="#9cdcfe" opacity="0.42"/><rect x="1001.49" y="88.65" width="0.56" height="0.85" fill="#d4d4d4" opacity="0.42"/><rect x="1002.05" y="88.65" width="0.56" height="0.85" fill="#d4d4d4" opacity="0.42"/><rect x="962.50" y="89.80" width="0.56" height="0.85" fill="#d4d4d4" opacity="0.42"/><rect x="962.50" y="92.10" width="14.69" height="0.85" fill="#6a9955" opacity="0.42"/><rect x="962.50" y="93.25" width="4.52" height="0.85" fill="#569cd6" opacity="0.42"/><rect x="967.59" y="93.25" width="9.04" height="0.85" fill="#dcdcaa" opacity="0.42"/><rect x="976.62" y="93.25" width="0.56" height="0.85" fill="#d4d4d4" opacity="0.42"/><rect x="977.19" y="93.25" width="2.82" height="0.85" fill="#9cdcfe" opacity="0.42"/><rect x="980.02" y="93.25" width="0.56" height="0.85" fill="#d4d4d4" opacity="0.42"/><rect x="981.15" y="93.25" width="0.56" height="0.85" fill="#9cdcfe" opacity="0.42"/><rect x="981.71" y="93.25" width="0.56" height="0.85" fill="#d4d4d4" opacity="0.42"/><rect x="982.84" y="93.25" width="0.56" height="0.85" fill="#9cdcfe" opacity="0.42"/><rect x="983.41" y="93.25" width="0.56" height="0.85" fill="#d4d4d4" opacity="0.42"/><rect x="984.54" y="93.25" width="2.82" height="0.85" fill="#9cdcfe" opacity="0.42"/><rect x="987.36" y="93.25" width="0.56" height="0.85" fill="#d4d4d4" opacity="0.42"/><rect x="988.49" y="93.25" width="3.39" height="0.85" fill="#9cdcfe" opacity="0.42"/><rect x="991.88" y="93.25" width="0.56" height="0.85" fill="#d4d4d4" opacity="0.42"/><rect x="993.01" y="93.25" width="0.56" height="0.85" fill="#d4d4d4" opacity="0.42"/><rect x="964.76" y="94.40" width="1.69" height="0.85" fill="#9cdcfe" opacity="0.42"/><rect x="966.46" y="94.40" width="0.56" height="0.85" fill="#d4d4d4" opacity="0.42"/><rect x="967.02" y="94.40" width="5.08" height="0.85" fill="#dcdcaa" opacity="0.42"/><rect x="972.11" y="94.40" width="0.56" height="0.85" fill="#d4d4d4" opacity="0.42"/><rect x="972.67" y="94.40" width="2.82" height="0.85" fill="#9cdcfe" opacity="0.42"/><rect x="975.50" y="94.40" width="0.56" height="0.85" fill="#d4d4d4" opacity="0.42"/><rect x="976.63" y="94.40" width="0.56" height="0.85" fill="#9cdcfe" opacity="0.42"/><rect x="977.76" y="94.40" width="0.56" height="0.85" fill="#d4d4d4" opacity="0.42"/><rect x="978.89" y="94.40" width="2.82" height="0.85" fill="#9cdcfe" opacity="0.42"/><rect x="982.28" y="94.40" width="0.56" height="0.85" fill="#d4d4d4" opacity="0.42"/><rect x="983.41" y="94.40" width="0.56" height="0.85" fill="#b5cea8" opacity="0.42"/><rect x="983.97" y="94.40" width="0.56" height="0.85" fill="#d4d4d4" opacity="0.42"/><rect x="985.10" y="94.40" width="0.56" height="0.85" fill="#9cdcfe" opacity="0.42"/><rect x="985.67" y="94.40" width="0.56" height="0.85" fill="#d4d4d4" opacity="0.42"/><rect x="986.80" y="94.40" width="2.82" height="0.85" fill="#9cdcfe" opacity="0.42"/><rect x="989.62" y="94.40" width="0.56" height="0.85" fill="#d4d4d4" opacity="0.42"/><rect x="990.75" y="94.40" width="3.39" height="0.85" fill="#9cdcfe" opacity="0.42"/><rect x="994.14" y="94.40" width="0.56" height="0.85" fill="#d4d4d4" opacity="0.42"/><rect x="994.71" y="94.40" width="0.56" height="0.85" fill="#d4d4d4" opacity="0.42"/><rect x="962.50" y="95.55" width="0.56" height="0.85" fill="#d4d4d4" opacity="0.42"/><rect x="962.50" y="97.85" width="14.69" height="0.85" fill="#6a9955" opacity="0.42"/><rect x="962.50" y="99.00" width="4.52" height="0.85" fill="#569cd6" opacity="0.42"/><rect x="967.59" y="99.00" width="9.04" height="0.85" fill="#dcdcaa" opacity="0.42"/><rect x="976.62" y="99.00" width="0.56" height="0.85" fill="#d4d4d4" opacity="0.42"/><rect x="977.19" y="99.00" width="2.82" height="0.85" fill="#9cdcfe" opacity="0.42"/><rect x="980.02" y="99.00" width="0.56" height="0.85" fill="#d4d4d4" opacity="0.42"/><rect x="981.15" y="99.00" width="0.56" height="0.85" fill="#9cdcfe" opacity="0.42"/><rect x="981.71" y="99.00" width="0.56" height="0.85" fill="#d4d4d4" opacity="0.42"/><rect x="982.84" y="99.00" width="0.56" height="0.85" fill="#9cdcfe" opacity="0.42"/><rect x="983.41" y="99.00" width="0.56" height="0.85" fill="#d4d4d4" opacity="0.42"/><rect x="984.54" y="99.00" width="2.82" height="0.85" fill="#9cdcfe" opacity="0.42"/><rect x="987.36" y="99.00" width="0.56" height="0.85" fill="#d4d4d4" opacity="0.42"/><rect x="988.49" y="99.00" width="3.39" height="0.85" fill="#9cdcfe" opacity="0.42"/><rect x="991.88" y="99.00" width="0.56" height="0.85" fill="#d4d4d4" opacity="0.42"/><rect x="993.01" y="99.00" width="0.56" height="0.85" fill="#d4d4d4" opacity="0.42"/><rect x="962.50" y="101.30" width="3.95" height="0.85" fill="#d4d4d4" opacity="0.42"/><rect x="962.50" y="103.60" width="4.52" height="0.85" fill="#569cd6" opacity="0.42"/><rect x="967.59" y="103.60" width="5.65" height="0.85" fill="#dcdcaa" opacity="0.42"/><rect x="973.24" y="103.60" width="0.56" height="0.85" fill="#d4d4d4" opacity="0.42"/><rect x="973.80" y="103.60" width="0.56" height="0.85" fill="#9cdcfe" opacity="0.42"/><rect x="974.37" y="103.60" width="0.56" height="0.85" fill="#d4d4d4" opacity="0.42"/><rect x="975.50" y="103.60" width="0.56" height="0.85" fill="#9cdcfe" opacity="0.42"/><rect x="976.06" y="103.60" width="0.56" height="0.85" fill="#d4d4d4" opacity="0.42"/><rect x="977.19" y="103.60" width="3.39" height="0.85" fill="#9cdcfe" opacity="0.42"/><rect x="980.58" y="103.60" width="0.56" height="0.85" fill="#d4d4d4" opacity="0.42"/><rect x="981.71" y="103.60" width="2.82" height="0.85" fill="#9cdcfe" opacity="0.42"/><rect x="984.54" y="103.60" width="0.56" height="0.85" fill="#d4d4d4" opacity="0.42"/><rect x="985.67" y="103.60" width="0.56" height="0.85" fill="#d4d4d4" opacity="0.42"/><rect x="964.76" y="104.75" width="1.69" height="0.85" fill="#9cdcfe" opacity="0.42"/><rect x="966.46" y="104.75" width="0.56" height="0.85" fill="#d4d4d4" opacity="0.42"/><rect x="967.02" y="104.75" width="5.08" height="0.85" fill="#dcdcaa" opacity="0.42"/><rect x="972.11" y="104.75" width="0.56" height="0.85" fill="#d4d4d4" opacity="0.42"/><rect x="972.67" y="104.75" width="0.56" height="0.85" fill="#d4d4d4" opacity="0.42"/><rect x="973.24" y="104.75" width="0.56" height="0.85" fill="#d4d4d4" opacity="0.42"/><rect x="964.76" y="105.90" width="1.69" height="0.85" fill="#9cdcfe" opacity="0.42"/><rect x="966.46" y="105.90" width="0.56" height="0.85" fill="#d4d4d4" opacity="0.42"/><rect x="967.02" y="105.90" width="1.69" height="0.85" fill="#dcdcaa" opacity="0.42"/><rect x="968.72" y="105.90" width="0.56" height="0.85" fill="#d4d4d4" opacity="0.42"/><rect x="969.28" y="105.90" width="0.56" height="0.85" fill="#9cdcfe" opacity="0.42"/><rect x="969.85" y="105.90" width="0.56" height="0.85" fill="#d4d4d4" opacity="0.42"/><rect x="970.98" y="105.90" width="0.56" height="0.85" fill="#9cdcfe" opacity="0.42"/><rect x="971.54" y="105.90" width="0.56" height="0.85" fill="#d4d4d4" opacity="0.42"/><rect x="972.67" y="105.90" width="3.39" height="0.85" fill="#9cdcfe" opacity="0.42"/><rect x="976.06" y="105.90" width="0.56" height="0.85" fill="#d4d4d4" opacity="0.42"/><rect x="977.19" y="105.90" width="0.56" height="0.85" fill="#b5cea8" opacity="0.42"/><rect x="977.76" y="105.90" width="0.56" height="0.85" fill="#d4d4d4" opacity="0.42"/><rect x="978.89" y="105.90" width="2.26" height="0.85" fill="#9cdcfe" opacity="0.42"/><rect x="981.15" y="105.90" width="0.56" height="0.85" fill="#d4d4d4" opacity="0.42"/><rect x="981.71" y="105.90" width="1.13" height="0.85" fill="#4fc1ff" opacity="0.42"/><rect x="983.41" y="105.90" width="0.56" height="0.85" fill="#d4d4d4" opacity="0.42"/><rect x="984.54" y="105.90" width="0.56" height="0.85" fill="#b5cea8" opacity="0.42"/><rect x="985.10" y="105.90" width="0.56" height="0.85" fill="#d4d4d4" opacity="0.42"/><rect x="986.23" y="105.90" width="2.82" height="0.85" fill="#569cd6" opacity="0.42"/><rect x="989.06" y="105.90" width="0.56" height="0.85" fill="#d4d4d4" opacity="0.42"/><rect x="989.62" y="105.90" width="0.56" height="0.85" fill="#d4d4d4" opacity="0.42"/><rect x="964.76" y="107.05" width="1.69" height="0.85" fill="#9cdcfe" opacity="0.42"/><rect x="966.46" y="107.05" width="0.56" height="0.85" fill="#d4d4d4" opacity="0.42"/><rect x="967.02" y="107.05" width="5.08" height="0.85" fill="#9cdcfe" opacity="0.42"/><rect x="972.67" y="107.05" width="0.56" height="0.85" fill="#d4d4d4" opacity="0.42"/><rect x="973.80" y="107.05" width="2.82" height="0.85" fill="#9cdcfe" opacity="0.42"/><rect x="976.63" y="107.05" width="0.56" height="0.85" fill="#d4d4d4" opacity="0.42"/><rect x="964.76" y="108.20" width="1.69" height="0.85" fill="#9cdcfe" opacity="0.42"/><rect x="966.46" y="108.20" width="0.56" height="0.85" fill="#d4d4d4" opacity="0.42"/><rect x="967.02" y="108.20" width="2.26" height="0.85" fill="#dcdcaa" opacity="0.42"/><rect x="969.28" y="108.20" width="0.56" height="0.85" fill="#d4d4d4" opacity="0.42"/><rect x="969.85" y="108.20" width="0.56" height="0.85" fill="#d4d4d4" opacity="0.42"/><rect x="970.41" y="108.20" width="0.56" height="0.85" fill="#d4d4d4" opacity="0.42"/><rect x="964.76" y="109.35" width="1.69" height="0.85" fill="#9cdcfe" opacity="0.42"/><rect x="966.46" y="109.35" width="0.56" height="0.85" fill="#d4d4d4" opacity="0.42"/><rect x="967.02" y="109.35" width="5.08" height="0.85" fill="#dcdcaa" opacity="0.42"/><rect x="972.11" y="109.35" width="0.56" height="0.85" fill="#d4d4d4" opacity="0.42"/><rect x="972.67" y="109.35" width="0.56" height="0.85" fill="#d4d4d4" opacity="0.42"/><rect x="973.24" y="109.35" width="0.56" height="0.85" fill="#d4d4d4" opacity="0.42"/><rect x="962.50" y="110.50" width="0.56" height="0.85" fill="#d4d4d4" opacity="0.42"/><rect x="962.50" y="112.80" width="10.17" height="0.85" fill="#6a9955" opacity="0.42"/><rect x="962.50" y="113.95" width="4.52" height="0.85" fill="#569cd6" opacity="0.42"/><rect x="967.59" y="113.95" width="4.52" height="0.85" fill="#dcdcaa" opacity="0.42"/><rect x="972.11" y="113.95" width="0.56" height="0.85" fill="#d4d4d4" opacity="0.42"/><rect x="972.67" y="113.95" width="0.56" height="0.85" fill="#9cdcfe" opacity="0.42"/><rect x="973.24" y="113.95" width="0.56" height="0.85" fill="#d4d4d4" opacity="0.42"/><rect x="974.37" y="113.95" width="0.56" height="0.85" fill="#9cdcfe" opacity="0.42"/><rect x="974.93" y="113.95" width="0.56" height="0.85" fill="#d4d4d4" opacity="0.42"/><rect x="976.06" y="113.95" width="2.82" height="0.85" fill="#9cdcfe" opacity="0.42"/><rect x="978.89" y="113.95" width="0.56" height="0.85" fill="#d4d4d4" opacity="0.42"/><rect x="980.02" y="113.95" width="3.39" height="0.85" fill="#9cdcfe" opacity="0.42"/><rect x="983.41" y="113.95" width="0.56" height="0.85" fill="#d4d4d4" opacity="0.42"/><rect x="984.54" y="113.95" width="2.82" height="0.85" fill="#9cdcfe" opacity="0.42"/><rect x="987.36" y="113.95" width="0.56" height="0.85" fill="#d4d4d4" opacity="0.42"/><rect x="988.49" y="113.95" width="0.56" height="0.85" fill="#d4d4d4" opacity="0.42"/><rect x="964.76" y="115.10" width="1.69" height="0.85" fill="#9cdcfe" opacity="0.42"/><rect x="966.46" y="115.10" width="0.56" height="0.85" fill="#d4d4d4" opacity="0.42"/><rect x="967.02" y="115.10" width="5.08" height="0.85" fill="#dcdcaa" opacity="0.42"/><rect x="972.11" y="115.10" width="0.56" height="0.85" fill="#d4d4d4" opacity="0.42"/><rect x="972.67" y="115.10" width="0.56" height="0.85" fill="#d4d4d4" opacity="0.42"/><rect x="973.24" y="115.10" width="0.56" height="0.85" fill="#d4d4d4" opacity="0.42"/><rect x="964.76" y="116.25" width="1.69" height="0.85" fill="#9cdcfe" opacity="0.42"/><rect x="966.46" y="116.25" width="0.56" height="0.85" fill="#d4d4d4" opacity="0.42"/><rect x="967.02" y="116.25" width="2.26" height="0.85" fill="#dcdcaa" opacity="0.42"/><rect x="969.28" y="116.25" width="0.56" height="0.85" fill="#d4d4d4" opacity="0.42"/><rect x="969.85" y="116.25" width="0.56" height="0.85" fill="#9cdcfe" opacity="0.42"/><rect x="970.41" y="116.25" width="0.56" height="0.85" fill="#d4d4d4" opacity="0.42"/><rect x="971.54" y="116.25" width="0.56" height="0.85" fill="#9cdcfe" opacity="0.42"/><rect x="972.11" y="116.25" width="0.56" height="0.85" fill="#d4d4d4" opacity="0.42"/><rect x="973.24" y="116.25" width="2.82" height="0.85" fill="#9cdcfe" opacity="0.42"/><rect x="976.06" y="116.25" width="0.56" height="0.85" fill="#d4d4d4" opacity="0.42"/><rect x="977.19" y="116.25" width="3.39" height="0.85" fill="#9cdcfe" opacity="0.42"/><rect x="980.58" y="116.25" width="0.56" height="0.85" fill="#d4d4d4" opacity="0.42"/><rect x="981.15" y="116.25" width="0.56" height="0.85" fill="#d4d4d4" opacity="0.42"/><rect x="964.76" y="117.40" width="1.69" height="0.85" fill="#9cdcfe" opacity="0.42"/><rect x="966.46" y="117.40" width="0.56" height="0.85" fill="#d4d4d4" opacity="0.42"/><rect x="967.02" y="117.40" width="5.08" height="0.85" fill="#9cdcfe" opacity="0.42"/><rect x="972.67" y="117.40" width="0.56" height="0.85" fill="#d4d4d4" opacity="0.42"/><rect x="973.80" y="117.40" width="2.82" height="0.85" fill="#9cdcfe" opacity="0.42"/><rect x="976.63" y="117.40" width="0.56" height="0.85" fill="#d4d4d4" opacity="0.42"/><rect x="964.76" y="118.55" width="1.69" height="0.85" fill="#9cdcfe" opacity="0.42"/><rect x="966.46" y="118.55" width="0.56" height="0.85" fill="#d4d4d4" opacity="0.42"/><rect x="967.02" y="118.55" width="2.26" height="0.85" fill="#dcdcaa" opacity="0.42"/><rect x="969.28" y="118.55" width="0.56" height="0.85" fill="#d4d4d4" opacity="0.42"/><rect x="969.85" y="118.55" width="0.56" height="0.85" fill="#d4d4d4" opacity="0.42"/><rect x="970.41" y="118.55" width="0.56" height="0.85" fill="#d4d4d4" opacity="0.42"/><rect x="964.76" y="119.70" width="1.69" height="0.85" fill="#9cdcfe" opacity="0.42"/><rect x="966.46" y="119.70" width="0.56" height="0.85" fill="#d4d4d4" opacity="0.42"/><rect x="967.02" y="119.70" width="5.08" height="0.85" fill="#dcdcaa" opacity="0.42"/><rect x="972.11" y="119.70" width="0.56" height="0.85" fill="#d4d4d4" opacity="0.42"/><rect x="972.67" y="119.70" width="0.56" height="0.85" fill="#d4d4d4" opacity="0.42"/><rect x="973.24" y="119.70" width="0.56" height="0.85" fill="#d4d4d4" opacity="0.42"/><rect x="962.50" y="120.85" width="0.56" height="0.85" fill="#d4d4d4" opacity="0.42"/><rect x="962.50" y="123.15" width="7.34" height="0.85" fill="#6a9955" opacity="0.42"/><rect x="962.50" y="124.30" width="4.52" height="0.85" fill="#569cd6" opacity="0.42"/><rect x="967.59" y="124.30" width="4.52" height="0.85" fill="#dcdcaa" opacity="0.42"/><rect x="972.11" y="124.30" width="0.56" height="0.85" fill="#d4d4d4" opacity="0.42"/><rect x="972.67" y="124.30" width="1.13" height="0.85" fill="#9cdcfe" opacity="0.42"/><rect x="973.80" y="124.30" width="0.56" height="0.85" fill="#d4d4d4" opacity="0.42"/><rect x="974.93" y="124.30" width="1.13" height="0.85" fill="#9cdcfe" opacity="0.42"/><rect x="976.06" y="124.30" width="0.56" height="0.85" fill="#d4d4d4" opacity="0.42"/><rect x="977.19" y="124.30" width="1.13" height="0.85" fill="#9cdcfe" opacity="0.42"/><rect x="978.32" y="124.30" width="0.56" height="0.85" fill="#d4d4d4" opacity="0.42"/><rect x="979.45" y="124.30" width="1.13" height="0.85" fill="#9cdcfe" opacity="0.42"/><rect x="980.58" y="124.30" width="0.56" height="0.85" fill="#d4d4d4" opacity="0.42"/><rect x="981.71" y="124.30" width="2.82" height="0.85" fill="#9cdcfe" opacity="0.42"/><rect x="984.54" y="124.30" width="0.56" height="0.85" fill="#d4d4d4" opacity="0.42"/><rect x="985.67" y="124.30" width="0.56" height="0.85" fill="#d4d4d4" opacity="0.42"/><rect x="964.76" y="125.45" width="1.69" height="0.85" fill="#9cdcfe" opacity="0.42"/><rect x="966.46" y="125.45" width="0.56" height="0.85" fill="#d4d4d4" opacity="0.42"/><rect x="967.02" y="125.45" width="5.08" height="0.85" fill="#dcdcaa" opacity="0.42"/><rect x="972.11" y="125.45" width="0.56" height="0.85" fill="#d4d4d4" opacity="0.42"/><rect x="972.67" y="125.45" width="0.56" height="0.85" fill="#d4d4d4" opacity="0.42"/><rect x="973.24" y="125.45" width="0.56" height="0.85" fill="#d4d4d4" opacity="0.42"/><rect x="964.76" y="126.60" width="1.69" height="0.85" fill="#9cdcfe" opacity="0.42"/><rect x="966.46" y="126.60" width="0.56" height="0.85" fill="#d4d4d4" opacity="0.42"/><rect x="967.02" y="126.60" width="3.39" height="0.85" fill="#dcdcaa" opacity="0.42"/><rect x="970.41" y="126.60" width="0.56" height="0.85" fill="#d4d4d4" opacity="0.42"/><rect x="970.98" y="126.60" width="1.13" height="0.85" fill="#9cdcfe" opacity="0.42"/><rect x="972.11" y="126.60" width="0.56" height="0.85" fill="#d4d4d4" opacity="0.42"/><rect x="973.24" y="126.60" width="1.13" height="0.85" fill="#9cdcfe" opacity="0.42"/><rect x="974.37" y="126.60" width="0.56" height="0.85" fill="#d4d4d4" opacity="0.42"/><rect x="974.93" y="126.60" width="0.56" height="0.85" fill="#d4d4d4" opacity="0.42"/><rect x="964.76" y="127.75" width="1.69" height="0.85" fill="#9cdcfe" opacity="0.42"/><rect x="966.46" y="127.75" width="0.56" height="0.85" fill="#d4d4d4" opacity="0.42"/><rect x="967.02" y="127.75" width="3.39" height="0.85" fill="#dcdcaa" opacity="0.42"/><rect x="970.41" y="127.75" width="0.56" height="0.85" fill="#d4d4d4" opacity="0.42"/><rect x="970.98" y="127.75" width="1.13" height="0.85" fill="#9cdcfe" opacity="0.42"/><rect x="972.11" y="127.75" width="0.56" height="0.85" fill="#d4d4d4" opacity="0.42"/><rect x="973.24" y="127.75" width="1.13" height="0.85" fill="#9cdcfe" opacity="0.42"/><rect x="974.37" y="127.75" width="0.56" height="0.85" fill="#d4d4d4" opacity="0.42"/><rect x="974.93" y="127.75" width="0.56" height="0.85" fill="#d4d4d4" opacity="0.42"/><rect x="964.76" y="128.90" width="1.69" height="0.85" fill="#9cdcfe" opacity="0.42"/><rect x="966.46" y="128.90" width="0.56" height="0.85" fill="#d4d4d4" opacity="0.42"/><rect x="967.02" y="128.90" width="6.21" height="0.85" fill="#9cdcfe" opacity="0.42"/><rect x="973.80" y="128.90" width="0.56" height="0.85" fill="#d4d4d4" opacity="0.42"/><rect x="974.93" y="128.90" width="2.82" height="0.85" fill="#9cdcfe" opacity="0.42"/><rect x="977.76" y="128.90" width="0.56" height="0.85" fill="#d4d4d4" opacity="0.42"/><rect x="964.76" y="130.05" width="1.69" height="0.85" fill="#9cdcfe" opacity="0.42"/><rect x="966.46" y="130.05" width="0.56" height="0.85" fill="#d4d4d4" opacity="0.42"/><rect x="967.02" y="130.05" width="3.39" height="0.85" fill="#dcdcaa" opacity="0.42"/><rect x="970.41" y="130.05" width="0.56" height="0.85" fill="#d4d4d4" opacity="0.42"/><rect x="970.98" y="130.05" width="0.56" height="0.85" fill="#d4d4d4" opacity="0.42"/><rect x="971.54" y="130.05" width="0.56" height="0.85" fill="#d4d4d4" opacity="0.42"/><rect x="964.76" y="131.20" width="1.69" height="0.85" fill="#9cdcfe" opacity="0.42"/><rect x="966.46" y="131.20" width="0.56" height="0.85" fill="#d4d4d4" opacity="0.42"/><rect x="967.02" y="131.20" width="5.08" height="0.85" fill="#dcdcaa" opacity="0.42"/><rect x="972.11" y="131.20" width="0.56" height="0.85" fill="#d4d4d4" opacity="0.42"/><rect x="972.67" y="131.20" width="0.56" height="0.85" fill="#d4d4d4" opacity="0.42"/><rect x="973.24" y="131.20" width="0.56" height="0.85" fill="#d4d4d4" opacity="0.42"/><rect x="962.50" y="132.35" width="0.56" height="0.85" fill="#d4d4d4" opacity="0.42"/><rect x="962.50" y="134.65" width="7.34" height="0.85" fill="#6a9955" opacity="0.42"/><rect x="962.50" y="135.80" width="4.52" height="0.85" fill="#569cd6" opacity="0.42"/><rect x="967.59" y="135.80" width="4.52" height="0.85" fill="#dcdcaa" opacity="0.42"/><rect x="972.11" y="135.80" width="0.56" height="0.85" fill="#d4d4d4" opacity="0.42"/><rect x="972.67" y="135.80" width="2.26" height="0.85" fill="#9cdcfe" opacity="0.42"/><rect x="974.93" y="135.80" width="0.56" height="0.85" fill="#d4d4d4" opacity="0.42"/><rect x="976.06" y="135.80" width="0.56" height="0.85" fill="#9cdcfe" opacity="0.42"/><rect x="976.63" y="135.80" width="0.56" height="0.85" fill="#d4d4d4" opacity="0.42"/><rect x="977.76" y="135.80" width="0.56" height="0.85" fill="#9cdcfe" opacity="0.42"/><rect x="978.32" y="135.80" width="0.56" height="0.85" fill="#d4d4d4" opacity="0.42"/><rect x="979.45" y="135.80" width="2.82" height="0.85" fill="#9cdcfe" opacity="0.42"/><rect x="982.28" y="135.80" width="0.56" height="0.85" fill="#d4d4d4" opacity="0.42"/><rect x="983.41" y="135.80" width="0.56" height="0.85" fill="#d4d4d4" opacity="0.42"/><rect x="964.76" y="136.95" width="1.69" height="0.85" fill="#9cdcfe" opacity="0.42"/><rect x="966.46" y="136.95" width="0.56" height="0.85" fill="#d4d4d4" opacity="0.42"/><rect x="967.02" y="136.95" width="2.26" height="0.85" fill="#9cdcfe" opacity="0.42"/><rect x="969.85" y="136.95" width="0.56" height="0.85" fill="#d4d4d4" opacity="0.42"/><rect x="970.98" y="136.95" width="6.78" height="0.85" fill="#ce9178" opacity="0.42"/><rect x="977.76" y="136.95" width="0.56" height="0.85" fill="#d4d4d4" opacity="0.42"/><rect x="964.76" y="138.10" width="1.69" height="0.85" fill="#9cdcfe" opacity="0.42"/><rect x="966.46" y="138.10" width="0.56" height="0.85" fill="#d4d4d4" opacity="0.42"/><rect x="967.02" y="138.10" width="5.08" height="0.85" fill="#9cdcfe" opacity="0.42"/><rect x="972.67" y="138.10" width="0.56" height="0.85" fill="#d4d4d4" opacity="0.42"/><rect x="973.80" y="138.10" width="2.82" height="0.85" fill="#9cdcfe" opacity="0.42"/><rect x="976.63" y="138.10" width="0.56" height="0.85" fill="#d4d4d4" opacity="0.42"/><rect x="964.76" y="139.25" width="1.69" height="0.85" fill="#9cdcfe" opacity="0.42"/><rect x="966.46" y="139.25" width="0.56" height="0.85" fill="#d4d4d4" opacity="0.42"/><rect x="967.02" y="139.25" width="4.52" height="0.85" fill="#dcdcaa" opacity="0.42"/><rect x="971.54" y="139.25" width="0.56" height="0.85" fill="#d4d4d4" opacity="0.42"/><rect x="972.11" y="139.25" width="2.26" height="0.85" fill="#9cdcfe" opacity="0.42"/><rect x="974.37" y="139.25" width="0.56" height="0.85" fill="#d4d4d4" opacity="0.42"/><rect x="975.50" y="139.25" width="0.56" height="0.85" fill="#9cdcfe" opacity="0.42"/><rect x="976.06" y="139.25" width="0.56" height="0.85" fill="#d4d4d4" opacity="0.42"/><rect x="977.19" y="139.25" width="0.56" height="0.85" fill="#9cdcfe" opacity="0.42"/><rect x="977.76" y="139.25" width="0.56" height="0.85" fill="#d4d4d4" opacity="0.42"/><rect x="978.32" y="139.25" width="0.56" height="0.85" fill="#d4d4d4" opacity="0.42"/><rect x="962.50" y="140.40" width="0.56" height="0.85" fill="#d4d4d4" opacity="0.42"/><rect x="962.50" y="142.70" width="7.91" height="0.85" fill="#6a9955" opacity="0.42"/><rect x="962.50" y="143.85" width="4.52" height="0.85" fill="#569cd6" opacity="0.42"/><rect x="967.59" y="143.85" width="5.08" height="0.85" fill="#dcdcaa" opacity="0.42"/><rect x="972.67" y="143.85" width="0.56" height="0.85" fill="#d4d4d4" opacity="0.42"/><rect x="973.24" y="143.85" width="2.82" height="0.85" fill="#9cdcfe" opacity="0.42"/><rect x="976.06" y="143.85" width="0.56" height="0.85" fill="#d4d4d4" opacity="0.42"/><rect x="977.19" y="143.85" width="0.56" height="0.85" fill="#9cdcfe" opacity="0.42"/><rect x="977.76" y="143.85" width="0.56" height="0.85" fill="#d4d4d4" opacity="0.42"/><rect x="978.89" y="143.85" width="0.56" height="0.85" fill="#9cdcfe" opacity="0.42"/><rect x="979.45" y="143.85" width="0.56" height="0.85" fill="#d4d4d4" opacity="0.42"/><rect x="980.58" y="143.85" width="2.82" height="0.85" fill="#9cdcfe" opacity="0.42"/><rect x="983.41" y="143.85" width="0.56" height="0.85" fill="#d4d4d4" opacity="0.42"/><rect x="984.54" y="143.85" width="3.39" height="0.85" fill="#9cdcfe" opacity="0.42"/><rect x="987.93" y="143.85" width="0.56" height="0.85" fill="#d4d4d4" opacity="0.42"/><rect x="989.06" y="143.85" width="0.56" height="0.85" fill="#d4d4d4" opacity="0.42"/><rect x="964.76" y="145.00" width="1.69" height="0.85" fill="#9cdcfe" opacity="0.42"/><rect x="966.46" y="145.00" width="0.56" height="0.85" fill="#d4d4d4" opacity="0.42"/><rect x="967.02" y="145.00" width="5.08" height="0.85" fill="#dcdcaa" opacity="0.42"/><rect x="972.11" y="145.00" width="0.56" height="0.85" fill="#d4d4d4" opacity="0.42"/><rect x="972.67" y="145.00" width="2.82" height="0.85" fill="#9cdcfe" opacity="0.42"/><rect x="975.50" y="145.00" width="0.56" height="0.85" fill="#d4d4d4" opacity="0.42"/><rect x="976.63" y="145.00" width="0.56" height="0.85" fill="#9cdcfe" opacity="0.42"/><rect x="977.19" y="145.00" width="0.56" height="0.85" fill="#d4d4d4" opacity="0.42"/><rect x="978.32" y="145.00" width="0.56" height="0.85" fill="#9cdcfe" opacity="0.42"/><rect x="978.89" y="145.00" width="0.56" height="0.85" fill="#d4d4d4" opacity="0.42"/><rect x="980.02" y="145.00" width="2.82" height="0.85" fill="#9cdcfe" opacity="0.42"/><rect x="982.84" y="145.00" width="0.56" height="0.85" fill="#d4d4d4" opacity="0.42"/><rect x="983.97" y="145.00" width="3.39" height="0.85" fill="#9cdcfe" opacity="0.42"/><rect x="987.36" y="145.00" width="0.56" height="0.85" fill="#d4d4d4" opacity="0.42"/><rect x="987.93" y="145.00" width="0.56" height="0.85" fill="#d4d4d4" opacity="0.42"/><rect x="962.50" y="146.15" width="0.56" height="0.85" fill="#d4d4d4" opacity="0.42"/><rect x="962.50" y="148.45" width="14.69" height="0.85" fill="#6a9955" opacity="0.42"/><rect x="962.50" y="150.75" width="3.95" height="0.85" fill="#d4d4d4" opacity="0.42"/><rect x="962.50" y="153.05" width="4.52" height="0.85" fill="#569cd6" opacity="0.42"/><rect x="967.59" y="153.05" width="5.65" height="0.85" fill="#dcdcaa" opacity="0.42"/><rect x="973.24" y="153.05" width="0.56" height="0.85" fill="#d4d4d4" opacity="0.42"/><rect x="973.80" y="153.05" width="0.56" height="0.85" fill="#9cdcfe" opacity="0.42"/><rect x="974.37" y="153.05" width="0.56" height="0.85" fill="#d4d4d4" opacity="0.42"/><rect x="975.50" y="153.05" width="0.56" height="0.85" fill="#9cdcfe" opacity="0.42"/><rect x="976.06" y="153.05" width="0.56" height="0.85" fill="#d4d4d4" opacity="0.42"/><rect x="977.19" y="153.05" width="3.39" height="0.85" fill="#9cdcfe" opacity="0.42"/><rect x="980.58" y="153.05" width="0.56" height="0.85" fill="#d4d4d4" opacity="0.42"/><rect x="981.71" y="153.05" width="2.82" height="0.85" fill="#9cdcfe" opacity="0.42"/><rect x="984.54" y="153.05" width="0.56" height="0.85" fill="#d4d4d4" opacity="0.42"/><rect x="985.67" y="153.05" width="0.56" height="0.85" fill="#d4d4d4" opacity="0.42"/><rect x="964.76" y="154.20" width="1.69" height="0.85" fill="#9cdcfe" opacity="0.42"/><rect x="966.46" y="154.20" width="0.56" height="0.85" fill="#d4d4d4" opacity="0.42"/><rect x="967.02" y="154.20" width="5.08" height="0.85" fill="#dcdcaa" opacity="0.42"/><rect x="972.11" y="154.20" width="0.56" height="0.85" fill="#d4d4d4" opacity="0.42"/><rect x="972.67" y="154.20" width="0.56" height="0.85" fill="#d4d4d4" opacity="0.42"/><rect x="973.24" y="154.20" width="0.56" height="0.85" fill="#d4d4d4" opacity="0.42"/><rect x="964.76" y="155.35" width="1.69" height="0.85" fill="#9cdcfe" opacity="0.42"/><rect x="966.46" y="155.35" width="0.56" height="0.85" fill="#d4d4d4" opacity="0.42"/><rect x="967.02" y="155.35" width="1.69" height="0.85" fill="#dcdcaa" opacity="0.42"/><rect x="968.72" y="155.35" width="0.56" height="0.85" fill="#d4d4d4" opacity="0.42"/><rect x="969.28" y="155.35" width="0.56" height="0.85" fill="#9cdcfe" opacity="0.42"/><rect x="969.85" y="155.35" width="0.56" height="0.85" fill="#d4d4d4" opacity="0.42"/><rect x="970.98" y="155.35" width="0.56" height="0.85" fill="#9cdcfe" opacity="0.42"/><rect x="971.54" y="155.35" width="0.56" height="0.85" fill="#d4d4d4" opacity="0.42"/><rect x="972.67" y="155.35" width="3.39" height="0.85" fill="#9cdcfe" opacity="0.42"/><rect x="976.06" y="155.35" width="0.56" height="0.85" fill="#d4d4d4" opacity="0.42"/><rect x="977.19" y="155.35" width="0.56" height="0.85" fill="#b5cea8" opacity="0.42"/><rect x="977.76" y="155.35" width="0.56" height="0.85" fill="#d4d4d4" opacity="0.42"/><rect x="978.89" y="155.35" width="2.26" height="0.85" fill="#9cdcfe" opacity="0.42"/><rect x="981.15" y="155.35" width="0.56" height="0.85" fill="#d4d4d4" opacity="0.42"/><rect x="981.71" y="155.35" width="1.13" height="0.85" fill="#4fc1ff" opacity="0.42"/><rect x="983.41" y="155.35" width="0.56" height="0.85" fill="#d4d4d4" opacity="0.42"/><rect x="984.54" y="155.35" width="0.56" height="0.85" fill="#b5cea8" opacity="0.42"/><rect x="985.10" y="155.35" width="0.56" height="0.85" fill="#d4d4d4" opacity="0.42"/><rect x="986.23" y="155.35" width="2.82" height="0.85" fill="#569cd6" opacity="0.42"/><rect x="989.06" y="155.35" width="0.56" height="0.85" fill="#d4d4d4" opacity="0.42"/><rect x="989.62" y="155.35" width="0.56" height="0.85" fill="#d4d4d4" opacity="0.42"/><rect x="964.76" y="156.50" width="1.69" height="0.85" fill="#9cdcfe" opacity="0.42"/><rect x="966.46" y="156.50" width="0.56" height="0.85" fill="#d4d4d4" opacity="0.42"/><rect x="967.02" y="156.50" width="5.08" height="0.85" fill="#9cdcfe" opacity="0.42"/><rect x="972.67" y="156.50" width="0.56" height="0.85" fill="#d4d4d4" opacity="0.42"/><rect x="973.80" y="156.50" width="2.82" height="0.85" fill="#9cdcfe" opacity="0.42"/><rect x="976.63" y="156.50" width="0.56" height="0.85" fill="#d4d4d4" opacity="0.42"/><rect x="964.76" y="157.65" width="1.69" height="0.85" fill="#9cdcfe" opacity="0.42"/><rect x="966.46" y="157.65" width="0.56" height="0.85" fill="#d4d4d4" opacity="0.42"/><rect x="967.02" y="157.65" width="2.26" height="0.85" fill="#dcdcaa" opacity="0.42"/><rect x="969.28" y="157.65" width="0.56" height="0.85" fill="#d4d4d4" opacity="0.42"/><rect x="969.85" y="157.65" width="0.56" height="0.85" fill="#d4d4d4" opacity="0.42"/><rect x="970.41" y="157.65" width="0.56" height="0.85" fill="#d4d4d4" opacity="0.42"/><rect x="964.76" y="158.80" width="1.69" height="0.85" fill="#9cdcfe" opacity="0.42"/><rect x="966.46" y="158.80" width="0.56" height="0.85" fill="#d4d4d4" opacity="0.42"/><rect x="967.02" y="158.80" width="5.08" height="0.85" fill="#dcdcaa" opacity="0.42"/><rect x="972.11" y="158.80" width="0.56" height="0.85" fill="#d4d4d4" opacity="0.42"/><rect x="972.67" y="158.80" width="0.56" height="0.85" fill="#d4d4d4" opacity="0.42"/><rect x="973.24" y="158.80" width="0.56" height="0.85" fill="#d4d4d4" opacity="0.42"/><rect x="962.50" y="159.95" width="0.56" height="0.85" fill="#d4d4d4" opacity="0.42"/><rect x="962.50" y="162.25" width="10.17" height="0.85" fill="#6a9955" opacity="0.42"/><rect x="962.50" y="163.40" width="4.52" height="0.85" fill="#569cd6" opacity="0.42"/><rect x="967.59" y="163.40" width="4.52" height="0.85" fill="#dcdcaa" opacity="0.42"/><rect x="972.11" y="163.40" width="0.56" height="0.85" fill="#d4d4d4" opacity="0.42"/><rect x="972.67" y="163.40" width="0.56" height="0.85" fill="#9cdcfe" opacity="0.42"/><rect x="973.24" y="163.40" width="0.56" height="0.85" fill="#d4d4d4" opacity="0.42"/><rect x="974.37" y="163.40" width="0.56" height="0.85" fill="#9cdcfe" opacity="0.42"/><rect x="974.93" y="163.40" width="0.56" height="0.85" fill="#d4d4d4" opacity="0.42"/><rect x="976.06" y="163.40" width="2.82" height="0.85" fill="#9cdcfe" opacity="0.42"/><rect x="978.89" y="163.40" width="0.56" height="0.85" fill="#d4d4d4" opacity="0.42"/><rect x="980.02" y="163.40" width="3.39" height="0.85" fill="#9cdcfe" opacity="0.42"/><rect x="983.41" y="163.40" width="0.56" height="0.85" fill="#d4d4d4" opacity="0.42"/><rect x="984.54" y="163.40" width="2.82" height="0.85" fill="#9cdcfe" opacity="0.42"/><rect x="987.36" y="163.40" width="0.56" height="0.85" fill="#d4d4d4" opacity="0.42"/><rect x="988.49" y="163.40" width="0.56" height="0.85" fill="#d4d4d4" opacity="0.42"/><rect x="964.76" y="164.55" width="1.69" height="0.85" fill="#9cdcfe" opacity="0.42"/><rect x="966.46" y="164.55" width="0.56" height="0.85" fill="#d4d4d4" opacity="0.42"/><rect x="967.02" y="164.55" width="5.08" height="0.85" fill="#dcdcaa" opacity="0.42"/><rect x="972.11" y="164.55" width="0.56" height="0.85" fill="#d4d4d4" opacity="0.42"/><rect x="972.67" y="164.55" width="0.56" height="0.85" fill="#d4d4d4" opacity="0.42"/><rect x="973.24" y="164.55" width="0.56" height="0.85" fill="#d4d4d4" opacity="0.42"/><rect x="964.76" y="165.70" width="1.69" height="0.85" fill="#9cdcfe" opacity="0.42"/><rect x="966.46" y="165.70" width="0.56" height="0.85" fill="#d4d4d4" opacity="0.42"/><rect x="967.02" y="165.70" width="2.26" height="0.85" fill="#dcdcaa" opacity="0.42"/><rect x="969.28" y="165.70" width="0.56" height="0.85" fill="#d4d4d4" opacity="0.42"/><rect x="969.85" y="165.70" width="0.56" height="0.85" fill="#9cdcfe" opacity="0.42"/><rect x="970.41" y="165.70" width="0.56" height="0.85" fill="#d4d4d4" opacity="0.42"/><rect x="971.54" y="165.70" width="0.56" height="0.85" fill="#9cdcfe" opacity="0.42"/><rect x="972.11" y="165.70" width="0.56" height="0.85" fill="#d4d4d4" opacity="0.42"/><rect x="973.24" y="165.70" width="2.82" height="0.85" fill="#9cdcfe" opacity="0.42"/><rect x="976.06" y="165.70" width="0.56" height="0.85" fill="#d4d4d4" opacity="0.42"/><rect x="977.19" y="165.70" width="3.39" height="0.85" fill="#9cdcfe" opacity="0.42"/><rect x="980.58" y="165.70" width="0.56" height="0.85" fill="#d4d4d4" opacity="0.42"/><rect x="981.15" y="165.70" width="0.56" height="0.85" fill="#d4d4d4" opacity="0.42"/><rect x="964.76" y="166.85" width="1.69" height="0.85" fill="#9cdcfe" opacity="0.42"/><rect x="966.46" y="166.85" width="0.56" height="0.85" fill="#d4d4d4" opacity="0.42"/><rect x="967.02" y="166.85" width="5.08" height="0.85" fill="#9cdcfe" opacity="0.42"/><rect x="972.67" y="166.85" width="0.56" height="0.85" fill="#d4d4d4" opacity="0.42"/><rect x="973.80" y="166.85" width="2.82" height="0.85" fill="#9cdcfe" opacity="0.42"/><rect x="976.63" y="166.85" width="0.56" height="0.85" fill="#d4d4d4" opacity="0.42"/><rect x="964.76" y="168.00" width="1.69" height="0.85" fill="#9cdcfe" opacity="0.42"/><rect x="966.46" y="168.00" width="0.56" height="0.85" fill="#d4d4d4" opacity="0.42"/><rect x="967.02" y="168.00" width="2.26" height="0.85" fill="#dcdcaa" opacity="0.42"/><rect x="969.28" y="168.00" width="0.56" height="0.85" fill="#d4d4d4" opacity="0.42"/><rect x="969.85" y="168.00" width="0.56" height="0.85" fill="#d4d4d4" opacity="0.42"/><rect x="970.41" y="168.00" width="0.56" height="0.85" fill="#d4d4d4" opacity="0.42"/><rect x="964.76" y="169.15" width="1.69" height="0.85" fill="#9cdcfe" opacity="0.42"/><rect x="966.46" y="169.15" width="0.56" height="0.85" fill="#d4d4d4" opacity="0.42"/><rect x="967.02" y="169.15" width="5.08" height="0.85" fill="#dcdcaa" opacity="0.42"/><rect x="972.11" y="169.15" width="0.56" height="0.85" fill="#d4d4d4" opacity="0.42"/><rect x="972.67" y="169.15" width="0.56" height="0.85" fill="#d4d4d4" opacity="0.42"/><rect x="973.24" y="169.15" width="0.56" height="0.85" fill="#d4d4d4" opacity="0.42"/><rect x="962.50" y="170.30" width="0.56" height="0.85" fill="#d4d4d4" opacity="0.42"/><rect x="962.50" y="172.60" width="7.34" height="0.85" fill="#6a9955" opacity="0.42"/><rect x="962.50" y="173.75" width="4.52" height="0.85" fill="#569cd6" opacity="0.42"/><rect x="967.59" y="173.75" width="4.52" height="0.85" fill="#dcdcaa" opacity="0.42"/><rect x="972.11" y="173.75" width="0.56" height="0.85" fill="#d4d4d4" opacity="0.42"/><rect x="972.67" y="173.75" width="1.13" height="0.85" fill="#9cdcfe" opacity="0.42"/><rect x="973.80" y="173.75" width="0.56" height="0.85" fill="#d4d4d4" opacity="0.42"/><rect x="974.93" y="173.75" width="1.13" height="0.85" fill="#9cdcfe" opacity="0.42"/><rect x="976.06" y="173.75" width="0.56" height="0.85" fill="#d4d4d4" opacity="0.42"/><rect x="977.19" y="173.75" width="1.13" height="0.85" fill="#9cdcfe" opacity="0.42"/><rect x="978.32" y="173.75" width="0.56" height="0.85" fill="#d4d4d4" opacity="0.42"/><rect x="979.45" y="173.75" width="1.13" height="0.85" fill="#9cdcfe" opacity="0.42"/><rect x="980.58" y="173.75" width="0.56" height="0.85" fill="#d4d4d4" opacity="0.42"/><rect x="981.71" y="173.75" width="2.82" height="0.85" fill="#9cdcfe" opacity="0.42"/><rect x="984.54" y="173.75" width="0.56" height="0.85" fill="#d4d4d4" opacity="0.42"/><rect x="985.67" y="173.75" width="0.56" height="0.85" fill="#d4d4d4" opacity="0.42"/><rect x="964.76" y="174.90" width="1.69" height="0.85" fill="#9cdcfe" opacity="0.42"/><rect x="966.46" y="174.90" width="0.56" height="0.85" fill="#d4d4d4" opacity="0.42"/><rect x="967.02" y="174.90" width="5.08" height="0.85" fill="#dcdcaa" opacity="0.42"/><rect x="972.11" y="174.90" width="0.56" height="0.85" fill="#d4d4d4" opacity="0.42"/><rect x="972.67" y="174.90" width="0.56" height="0.85" fill="#d4d4d4" opacity="0.42"/><rect x="973.24" y="174.90" width="0.56" height="0.85" fill="#d4d4d4" opacity="0.42"/><rect x="964.76" y="176.05" width="1.69" height="0.85" fill="#9cdcfe" opacity="0.42"/><rect x="966.46" y="176.05" width="0.56" height="0.85" fill="#d4d4d4" opacity="0.42"/><rect x="967.02" y="176.05" width="3.39" height="0.85" fill="#dcdcaa" opacity="0.42"/><rect x="970.41" y="176.05" width="0.56" height="0.85" fill="#d4d4d4" opacity="0.42"/><rect x="970.98" y="176.05" width="1.13" height="0.85" fill="#9cdcfe" opacity="0.42"/><rect x="972.11" y="176.05" width="0.56" height="0.85" fill="#d4d4d4" opacity="0.42"/><rect x="973.24" y="176.05" width="1.13" height="0.85" fill="#9cdcfe" opacity="0.42"/><rect x="974.37" y="176.05" width="0.56" height="0.85" fill="#d4d4d4" opacity="0.42"/><rect x="974.93" y="176.05" width="0.56" height="0.85" fill="#d4d4d4" opacity="0.42"/><rect x="964.76" y="177.20" width="1.69" height="0.85" fill="#9cdcfe" opacity="0.42"/><rect x="966.46" y="177.20" width="0.56" height="0.85" fill="#d4d4d4" opacity="0.42"/><rect x="967.02" y="177.20" width="3.39" height="0.85" fill="#dcdcaa" opacity="0.42"/><rect x="970.41" y="177.20" width="0.56" height="0.85" fill="#d4d4d4" opacity="0.42"/><rect x="970.98" y="177.20" width="1.13" height="0.85" fill="#9cdcfe" opacity="0.42"/><rect x="972.11" y="177.20" width="0.56" height="0.85" fill="#d4d4d4" opacity="0.42"/><rect x="973.24" y="177.20" width="1.13" height="0.85" fill="#9cdcfe" opacity="0.42"/><rect x="974.37" y="177.20" width="0.56" height="0.85" fill="#d4d4d4" opacity="0.42"/><rect x="974.93" y="177.20" width="0.56" height="0.85" fill="#d4d4d4" opacity="0.42"/><rect x="964.76" y="178.35" width="1.69" height="0.85" fill="#9cdcfe" opacity="0.42"/><rect x="966.46" y="178.35" width="0.56" height="0.85" fill="#d4d4d4" opacity="0.42"/><rect x="967.02" y="178.35" width="6.21" height="0.85" fill="#9cdcfe" opacity="0.42"/><rect x="973.80" y="178.35" width="0.56" height="0.85" fill="#d4d4d4" opacity="0.42"/><rect x="974.93" y="178.35" width="2.82" height="0.85" fill="#9cdcfe" opacity="0.42"/><rect x="977.76" y="178.35" width="0.56" height="0.85" fill="#d4d4d4" opacity="0.42"/><rect x="964.76" y="179.50" width="1.69" height="0.85" fill="#9cdcfe" opacity="0.42"/><rect x="966.46" y="179.50" width="0.56" height="0.85" fill="#d4d4d4" opacity="0.42"/><rect x="967.02" y="179.50" width="3.39" height="0.85" fill="#dcdcaa" opacity="0.42"/><rect x="970.41" y="179.50" width="0.56" height="0.85" fill="#d4d4d4" opacity="0.42"/><rect x="970.98" y="179.50" width="0.56" height="0.85" fill="#d4d4d4" opacity="0.42"/><rect x="971.54" y="179.50" width="0.56" height="0.85" fill="#d4d4d4" opacity="0.42"/><rect x="964.76" y="180.65" width="1.69" height="0.85" fill="#9cdcfe" opacity="0.42"/><rect x="966.46" y="180.65" width="0.56" height="0.85" fill="#d4d4d4" opacity="0.42"/><rect x="967.02" y="180.65" width="5.08" height="0.85" fill="#dcdcaa" opacity="0.42"/><rect x="972.11" y="180.65" width="0.56" height="0.85" fill="#d4d4d4" opacity="0.42"/><rect x="972.67" y="180.65" width="0.56" height="0.85" fill="#d4d4d4" opacity="0.42"/><rect x="973.24" y="180.65" width="0.56" height="0.85" fill="#d4d4d4" opacity="0.42"/><rect x="962.50" y="181.80" width="0.56" height="0.85" fill="#d4d4d4" opacity="0.42"/><rect x="962.50" y="184.10" width="7.34" height="0.85" fill="#6a9955" opacity="0.42"/><rect x="962.50" y="185.25" width="4.52" height="0.85" fill="#569cd6" opacity="0.42"/><rect x="967.59" y="185.25" width="4.52" height="0.85" fill="#dcdcaa" opacity="0.42"/><rect x="972.11" y="185.25" width="0.56" height="0.85" fill="#d4d4d4" opacity="0.42"/><rect x="972.67" y="185.25" width="2.26" height="0.85" fill="#9cdcfe" opacity="0.42"/><rect x="974.93" y="185.25" width="0.56" height="0.85" fill="#d4d4d4" opacity="0.42"/><rect x="976.06" y="185.25" width="0.56" height="0.85" fill="#9cdcfe" opacity="0.42"/><rect x="976.63" y="185.25" width="0.56" height="0.85" fill="#d4d4d4" opacity="0.42"/><rect x="977.76" y="185.25" width="0.56" height="0.85" fill="#9cdcfe" opacity="0.42"/><rect x="978.32" y="185.25" width="0.56" height="0.85" fill="#d4d4d4" opacity="0.42"/><rect x="979.45" y="185.25" width="2.82" height="0.85" fill="#9cdcfe" opacity="0.42"/><rect x="982.28" y="185.25" width="0.56" height="0.85" fill="#d4d4d4" opacity="0.42"/><rect x="983.41" y="185.25" width="0.56" height="0.85" fill="#d4d4d4" opacity="0.42"/><rect x="964.76" y="186.40" width="1.69" height="0.85" fill="#9cdcfe" opacity="0.42"/><rect x="966.46" y="186.40" width="0.56" height="0.85" fill="#d4d4d4" opacity="0.42"/><rect x="967.02" y="186.40" width="2.26" height="0.85" fill="#9cdcfe" opacity="0.42"/><rect x="969.85" y="186.40" width="0.56" height="0.85" fill="#d4d4d4" opacity="0.42"/><rect x="970.98" y="186.40" width="6.78" height="0.85" fill="#ce9178" opacity="0.42"/><rect x="977.76" y="186.40" width="0.56" height="0.85" fill="#d4d4d4" opacity="0.42"/><rect x="964.76" y="187.55" width="1.69" height="0.85" fill="#9cdcfe" opacity="0.42"/><rect x="966.46" y="187.55" width="0.56" height="0.85" fill="#d4d4d4" opacity="0.42"/><rect x="967.02" y="187.55" width="5.08" height="0.85" fill="#9cdcfe" opacity="0.42"/><rect x="972.67" y="187.55" width="0.56" height="0.85" fill="#d4d4d4" opacity="0.42"/><rect x="973.80" y="187.55" width="2.82" height="0.85" fill="#9cdcfe" opacity="0.42"/><rect x="976.63" y="187.55" width="0.56" height="0.85" fill="#d4d4d4" opacity="0.42"/><rect x="964.76" y="188.70" width="1.69" height="0.85" fill="#9cdcfe" opacity="0.42"/><rect x="966.46" y="188.70" width="0.56" height="0.85" fill="#d4d4d4" opacity="0.42"/><rect x="967.02" y="188.70" width="4.52" height="0.85" fill="#dcdcaa" opacity="0.42"/><rect x="971.54" y="188.70" width="0.56" height="0.85" fill="#d4d4d4" opacity="0.42"/><rect x="972.11" y="188.70" width="2.26" height="0.85" fill="#9cdcfe" opacity="0.42"/><rect x="974.37" y="188.70" width="0.56" height="0.85" fill="#d4d4d4" opacity="0.42"/><rect x="975.50" y="188.70" width="0.56" height="0.85" fill="#9cdcfe" opacity="0.42"/><rect x="976.06" y="188.70" width="0.56" height="0.85" fill="#d4d4d4" opacity="0.42"/><rect x="977.19" y="188.70" width="0.56" height="0.85" fill="#9cdcfe" opacity="0.42"/><rect x="977.76" y="188.70" width="0.56" height="0.85" fill="#d4d4d4" opacity="0.42"/><rect x="978.32" y="188.70" width="0.56" height="0.85" fill="#d4d4d4" opacity="0.42"/><rect x="962.50" y="189.85" width="0.56" height="0.85" fill="#d4d4d4" opacity="0.42"/><rect x="962.50" y="192.15" width="7.91" height="0.85" fill="#6a9955" opacity="0.42"/><rect x="962.50" y="193.30" width="4.52" height="0.85" fill="#569cd6" opacity="0.42"/><rect x="967.59" y="193.30" width="5.08" height="0.85" fill="#dcdcaa" opacity="0.42"/><rect x="972.67" y="193.30" width="0.56" height="0.85" fill="#d4d4d4" opacity="0.42"/><rect x="973.24" y="193.30" width="2.82" height="0.85" fill="#9cdcfe" opacity="0.42"/><rect x="976.06" y="193.30" width="0.56" height="0.85" fill="#d4d4d4" opacity="0.42"/><rect x="977.19" y="193.30" width="0.56" height="0.85" fill="#9cdcfe" opacity="0.42"/><rect x="977.76" y="193.30" width="0.56" height="0.85" fill="#d4d4d4" opacity="0.42"/><rect x="978.89" y="193.30" width="0.56" height="0.85" fill="#9cdcfe" opacity="0.42"/><rect x="979.45" y="193.30" width="0.56" height="0.85" fill="#d4d4d4" opacity="0.42"/><rect x="980.58" y="193.30" width="2.82" height="0.85" fill="#9cdcfe" opacity="0.42"/><rect x="983.41" y="193.30" width="0.56" height="0.85" fill="#d4d4d4" opacity="0.42"/><rect x="984.54" y="193.30" width="3.39" height="0.85" fill="#9cdcfe" opacity="0.42"/><rect x="987.93" y="193.30" width="0.56" height="0.85" fill="#d4d4d4" opacity="0.42"/><rect x="989.06" y="193.30" width="0.56" height="0.85" fill="#d4d4d4" opacity="0.42"/><rect x="964.76" y="194.45" width="1.69" height="0.85" fill="#9cdcfe" opacity="0.42"/><rect x="966.46" y="194.45" width="0.56" height="0.85" fill="#d4d4d4" opacity="0.42"/><rect x="967.02" y="194.45" width="5.08" height="0.85" fill="#dcdcaa" opacity="0.42"/><rect x="972.11" y="194.45" width="0.56" height="0.85" fill="#d4d4d4" opacity="0.42"/><rect x="972.67" y="194.45" width="2.82" height="0.85" fill="#9cdcfe" opacity="0.42"/><rect x="975.50" y="194.45" width="0.56" height="0.85" fill="#d4d4d4" opacity="0.42"/><rect x="976.63" y="194.45" width="0.56" height="0.85" fill="#9cdcfe" opacity="0.42"/><rect x="977.19" y="194.45" width="0.56" height="0.85" fill="#d4d4d4" opacity="0.42"/><rect x="978.32" y="194.45" width="0.56" height="0.85" fill="#9cdcfe" opacity="0.42"/><rect x="978.89" y="194.45" width="0.56" height="0.85" fill="#d4d4d4" opacity="0.42"/><rect x="980.02" y="194.45" width="2.82" height="0.85" fill="#9cdcfe" opacity="0.42"/><rect x="982.84" y="194.45" width="0.56" height="0.85" fill="#d4d4d4" opacity="0.42"/><rect x="983.97" y="194.45" width="3.39" height="0.85" fill="#9cdcfe" opacity="0.42"/><rect x="987.36" y="194.45" width="0.56" height="0.85" fill="#d4d4d4" opacity="0.42"/><rect x="987.93" y="194.45" width="0.56" height="0.85" fill="#d4d4d4" opacity="0.42"/><rect x="962.50" y="195.60" width="0.56" height="0.85" fill="#d4d4d4" opacity="0.42"/><rect x="962.50" y="197.90" width="14.69" height="0.85" fill="#6a9955" opacity="0.42"/><rect x="962.50" y="199.05" width="4.52" height="0.85" fill="#569cd6" opacity="0.42"/><rect x="967.59" y="199.05" width="8.47" height="0.85" fill="#dcdcaa" opacity="0.42"/><rect x="976.06" y="199.05" width="0.56" height="0.85" fill="#d4d4d4" opacity="0.42"/><rect x="976.63" y="199.05" width="2.82" height="0.85" fill="#9cdcfe" opacity="0.42"/><rect x="979.45" y="199.05" width="0.56" height="0.85" fill="#d4d4d4" opacity="0.42"/><rect x="980.58" y="199.05" width="0.56" height="0.85" fill="#9cdcfe" opacity="0.42"/><rect x="981.15" y="199.05" width="0.56" height="0.85" fill="#d4d4d4" opacity="0.42"/><rect x="982.28" y="199.05" width="0.56" height="0.85" fill="#9cdcfe" opacity="0.42"/><rect x="982.84" y="199.05" width="0.56" height="0.85" fill="#d4d4d4" opacity="0.42"/><rect x="983.97" y="199.05" width="2.82" height="0.85" fill="#9cdcfe" opacity="0.42"/><rect x="986.80" y="199.05" width="0.56" height="0.85" fill="#d4d4d4" opacity="0.42"/><rect x="987.93" y="199.05" width="3.39" height="0.85" fill="#9cdcfe" opacity="0.42"/><rect x="991.32" y="199.05" width="0.56" height="0.85" fill="#d4d4d4" opacity="0.42"/><rect x="992.45" y="199.05" width="0.56" height="0.85" fill="#d4d4d4" opacity="0.42"/><rect x="964.76" y="200.20" width="1.69" height="0.85" fill="#9cdcfe" opacity="0.42"/><rect x="966.46" y="200.20" width="0.56" height="0.85" fill="#d4d4d4" opacity="0.42"/><rect x="967.02" y="200.20" width="5.08" height="0.85" fill="#dcdcaa" opacity="0.42"/><rect x="972.11" y="200.20" width="0.56" height="0.85" fill="#d4d4d4" opacity="0.42"/><rect x="972.67" y="200.20" width="2.82" height="0.85" fill="#9cdcfe" opacity="0.42"/><rect x="975.50" y="200.20" width="0.56" height="0.85" fill="#d4d4d4" opacity="0.42"/><rect x="976.63" y="200.20" width="0.56" height="0.85" fill="#9cdcfe" opacity="0.42"/><rect x="977.76" y="200.20" width="0.56" height="0.85" fill="#d4d4d4" opacity="0.42"/><rect x="978.89" y="200.20" width="2.82" height="0.85" fill="#9cdcfe" opacity="0.42"/><rect x="982.28" y="200.20" width="0.56" height="0.85" fill="#d4d4d4" opacity="0.42"/><rect x="983.41" y="200.20" width="0.56" height="0.85" fill="#b5cea8" opacity="0.42"/><rect x="983.97" y="200.20" width="0.56" height="0.85" fill="#d4d4d4" opacity="0.42"/><rect x="985.10" y="200.20" width="0.56" height="0.85" fill="#9cdcfe" opacity="0.42"/><rect x="986.23" y="200.20" width="0.56" height="0.85" fill="#d4d4d4" opacity="0.42"/><rect x="987.36" y="200.20" width="3.39" height="0.85" fill="#9cdcfe" opacity="0.42"/><rect x="991.32" y="200.20" width="0.56" height="0.85" fill="#d4d4d4" opacity="0.42"/><rect x="992.45" y="200.20" width="0.56" height="0.85" fill="#b5cea8" opacity="0.42"/><rect x="993.01" y="200.20" width="0.56" height="0.85" fill="#d4d4d4" opacity="0.42"/><rect x="994.14" y="200.20" width="2.82" height="0.85" fill="#9cdcfe" opacity="0.42"/><rect x="996.97" y="200.20" width="0.56" height="0.85" fill="#d4d4d4" opacity="0.42"/><rect x="998.10" y="200.20" width="3.39" height="0.85" fill="#9cdcfe" opacity="0.42"/><rect x="1001.49" y="200.20" width="0.56" height="0.85" fill="#d4d4d4" opacity="0.42"/><rect x="1002.05" y="200.20" width="0.56" height="0.85" fill="#d4d4d4" opacity="0.42"/><rect x="962.50" y="201.35" width="0.56" height="0.85" fill="#d4d4d4" opacity="0.42"/><rect x="962.50" y="203.65" width="14.69" height="0.85" fill="#6a9955" opacity="0.42"/><rect x="962.50" y="204.80" width="4.52" height="0.85" fill="#569cd6" opacity="0.42"/><rect x="967.59" y="204.80" width="9.04" height="0.85" fill="#dcdcaa" opacity="0.42"/><rect x="976.62" y="204.80" width="0.56" height="0.85" fill="#d4d4d4" opacity="0.42"/><rect x="977.19" y="204.80" width="2.82" height="0.85" fill="#9cdcfe" opacity="0.42"/><rect x="980.02" y="204.80" width="0.56" height="0.85" fill="#d4d4d4" opacity="0.42"/><rect x="981.15" y="204.80" width="0.56" height="0.85" fill="#9cdcfe" opacity="0.42"/><rect x="981.71" y="204.80" width="0.56" height="0.85" fill="#d4d4d4" opacity="0.42"/><rect x="982.84" y="204.80" width="0.56" height="0.85" fill="#9cdcfe" opacity="0.42"/><rect x="983.41" y="204.80" width="0.56" height="0.85" fill="#d4d4d4" opacity="0.42"/><rect x="984.54" y="204.80" width="2.82" height="0.85" fill="#9cdcfe" opacity="0.42"/><rect x="987.36" y="204.80" width="0.56" height="0.85" fill="#d4d4d4" opacity="0.42"/><rect x="988.49" y="204.80" width="3.39" height="0.85" fill="#9cdcfe" opacity="0.42"/><rect x="991.88" y="204.80" width="0.56" height="0.85" fill="#d4d4d4" opacity="0.42"/><rect x="993.01" y="204.80" width="0.56" height="0.85" fill="#d4d4d4" opacity="0.42"/><rect x="964.76" y="205.95" width="1.69" height="0.85" fill="#9cdcfe" opacity="0.42"/><rect x="966.46" y="205.95" width="0.56" height="0.85" fill="#d4d4d4" opacity="0.42"/><rect x="967.02" y="205.95" width="5.08" height="0.85" fill="#dcdcaa" opacity="0.42"/><rect x="972.11" y="205.95" width="0.56" height="0.85" fill="#d4d4d4" opacity="0.42"/><rect x="972.67" y="205.95" width="2.82" height="0.85" fill="#9cdcfe" opacity="0.42"/><rect x="975.50" y="205.95" width="0.56" height="0.85" fill="#d4d4d4" opacity="0.42"/><rect x="976.63" y="205.95" width="0.56" height="0.85" fill="#9cdcfe" opacity="0.42"/><rect x="977.76" y="205.95" width="0.56" height="0.85" fill="#d4d4d4" opacity="0.42"/><rect x="978.89" y="205.95" width="2.82" height="0.85" fill="#9cdcfe" opacity="0.42"/><rect x="982.28" y="205.95" width="0.56" height="0.85" fill="#d4d4d4" opacity="0.42"/><rect x="983.41" y="205.95" width="0.56" height="0.85" fill="#b5cea8" opacity="0.42"/><rect x="983.97" y="205.95" width="0.56" height="0.85" fill="#d4d4d4" opacity="0.42"/><rect x="985.10" y="205.95" width="0.56" height="0.85" fill="#9cdcfe" opacity="0.42"/><rect x="985.67" y="205.95" width="0.56" height="0.85" fill="#d4d4d4" opacity="0.42"/><rect x="986.80" y="205.95" width="2.82" height="0.85" fill="#9cdcfe" opacity="0.42"/><rect x="989.62" y="205.95" width="0.56" height="0.85" fill="#d4d4d4" opacity="0.42"/><rect x="990.75" y="205.95" width="3.39" height="0.85" fill="#9cdcfe" opacity="0.42"/><rect x="994.14" y="205.95" width="0.56" height="0.85" fill="#d4d4d4" opacity="0.42"/><rect x="994.71" y="205.95" width="0.56" height="0.85" fill="#d4d4d4" opacity="0.42"/><rect x="962.50" y="207.10" width="0.56" height="0.85" fill="#d4d4d4" opacity="0.42"/><rect x="962.50" y="209.40" width="14.69" height="0.85" fill="#6a9955" opacity="0.42"/><rect x="962.50" y="211.70" width="3.95" height="0.85" fill="#d4d4d4" opacity="0.42"/><rect x="962.50" y="214.00" width="4.52" height="0.85" fill="#569cd6" opacity="0.42"/><rect x="967.59" y="214.00" width="5.65" height="0.85" fill="#dcdcaa" opacity="0.42"/><rect x="973.24" y="214.00" width="0.56" height="0.85" fill="#d4d4d4" opacity="0.42"/><rect x="973.80" y="214.00" width="0.56" height="0.85" fill="#9cdcfe" opacity="0.42"/><rect x="974.37" y="214.00" width="0.56" height="0.85" fill="#d4d4d4" opacity="0.42"/><rect x="975.50" y="214.00" width="0.56" height="0.85" fill="#9cdcfe" opacity="0.42"/><rect x="976.06" y="214.00" width="0.56" height="0.85" fill="#d4d4d4" opacity="0.42"/><rect x="977.19" y="214.00" width="3.39" height="0.85" fill="#9cdcfe" opacity="0.42"/><rect x="980.58" y="214.00" width="0.56" height="0.85" fill="#d4d4d4" opacity="0.42"/><rect x="981.71" y="214.00" width="2.82" height="0.85" fill="#9cdcfe" opacity="0.42"/><rect x="984.54" y="214.00" width="0.56" height="0.85" fill="#d4d4d4" opacity="0.42"/><rect x="985.67" y="214.00" width="0.56" height="0.85" fill="#d4d4d4" opacity="0.42"/><rect x="964.76" y="215.15" width="1.69" height="0.85" fill="#9cdcfe" opacity="0.42"/><rect x="966.46" y="215.15" width="0.56" height="0.85" fill="#d4d4d4" opacity="0.42"/><rect x="967.02" y="215.15" width="5.08" height="0.85" fill="#dcdcaa" opacity="0.42"/><rect x="972.11" y="215.15" width="0.56" height="0.85" fill="#d4d4d4" opacity="0.42"/><rect x="972.67" y="215.15" width="0.56" height="0.85" fill="#d4d4d4" opacity="0.42"/><rect x="973.24" y="215.15" width="0.56" height="0.85" fill="#d4d4d4" opacity="0.42"/><rect x="964.76" y="216.30" width="1.69" height="0.85" fill="#9cdcfe" opacity="0.42"/><rect x="966.46" y="216.30" width="0.56" height="0.85" fill="#d4d4d4" opacity="0.42"/><rect x="967.02" y="216.30" width="1.69" height="0.85" fill="#dcdcaa" opacity="0.42"/><rect x="968.72" y="216.30" width="0.56" height="0.85" fill="#d4d4d4" opacity="0.42"/><rect x="969.28" y="216.30" width="0.56" height="0.85" fill="#9cdcfe" opacity="0.42"/><rect x="969.85" y="216.30" width="0.56" height="0.85" fill="#d4d4d4" opacity="0.42"/><rect x="970.98" y="216.30" width="0.56" height="0.85" fill="#9cdcfe" opacity="0.42"/><rect x="971.54" y="216.30" width="0.56" height="0.85" fill="#d4d4d4" opacity="0.42"/><rect x="972.67" y="216.30" width="3.39" height="0.85" fill="#9cdcfe" opacity="0.42"/><rect x="976.06" y="216.30" width="0.56" height="0.85" fill="#d4d4d4" opacity="0.42"/><rect x="977.19" y="216.30" width="0.56" height="0.85" fill="#b5cea8" opacity="0.42"/><rect x="977.76" y="216.30" width="0.56" height="0.85" fill="#d4d4d4" opacity="0.42"/><rect x="978.89" y="216.30" width="2.26" height="0.85" fill="#9cdcfe" opacity="0.42"/><rect x="981.15" y="216.30" width="0.56" height="0.85" fill="#d4d4d4" opacity="0.42"/><rect x="981.71" y="216.30" width="1.13" height="0.85" fill="#4fc1ff" opacity="0.42"/><rect x="983.41" y="216.30" width="0.56" height="0.85" fill="#d4d4d4" opacity="0.42"/><rect x="984.54" y="216.30" width="0.56" height="0.85" fill="#b5cea8" opacity="0.42"/><rect x="985.10" y="216.30" width="0.56" height="0.85" fill="#d4d4d4" opacity="0.42"/><rect x="986.23" y="216.30" width="2.82" height="0.85" fill="#569cd6" opacity="0.42"/><rect x="989.06" y="216.30" width="0.56" height="0.85" fill="#d4d4d4" opacity="0.42"/><rect x="989.62" y="216.30" width="0.56" height="0.85" fill="#d4d4d4" opacity="0.42"/><rect x="964.76" y="217.45" width="1.69" height="0.85" fill="#9cdcfe" opacity="0.42"/><rect x="966.46" y="217.45" width="0.56" height="0.85" fill="#d4d4d4" opacity="0.42"/><rect x="967.02" y="217.45" width="5.08" height="0.85" fill="#9cdcfe" opacity="0.42"/><rect x="972.67" y="217.45" width="0.56" height="0.85" fill="#d4d4d4" opacity="0.42"/><rect x="973.80" y="217.45" width="2.82" height="0.85" fill="#9cdcfe" opacity="0.42"/><rect x="976.63" y="217.45" width="0.56" height="0.85" fill="#d4d4d4" opacity="0.42"/><rect x="964.76" y="218.60" width="1.69" height="0.85" fill="#9cdcfe" opacity="0.42"/><rect x="966.46" y="218.60" width="0.56" height="0.85" fill="#d4d4d4" opacity="0.42"/><rect x="967.02" y="218.60" width="2.26" height="0.85" fill="#dcdcaa" opacity="0.42"/><rect x="969.28" y="218.60" width="0.56" height="0.85" fill="#d4d4d4" opacity="0.42"/><rect x="969.85" y="218.60" width="0.56" height="0.85" fill="#d4d4d4" opacity="0.42"/><rect x="970.41" y="218.60" width="0.56" height="0.85" fill="#d4d4d4" opacity="0.42"/><rect x="964.76" y="219.75" width="1.69" height="0.85" fill="#9cdcfe" opacity="0.42"/><rect x="966.46" y="219.75" width="0.56" height="0.85" fill="#d4d4d4" opacity="0.42"/><rect x="967.02" y="219.75" width="5.08" height="0.85" fill="#dcdcaa" opacity="0.42"/><rect x="972.11" y="219.75" width="0.56" height="0.85" fill="#d4d4d4" opacity="0.42"/><rect x="972.67" y="219.75" width="0.56" height="0.85" fill="#d4d4d4" opacity="0.42"/><rect x="973.24" y="219.75" width="0.56" height="0.85" fill="#d4d4d4" opacity="0.42"/><rect x="962.50" y="220.90" width="0.56" height="0.85" fill="#d4d4d4" opacity="0.42"/><rect x="962.50" y="223.20" width="10.17" height="0.85" fill="#6a9955" opacity="0.42"/><rect x="962.50" y="224.35" width="4.52" height="0.85" fill="#569cd6" opacity="0.42"/><rect x="967.59" y="224.35" width="4.52" height="0.85" fill="#dcdcaa" opacity="0.42"/><rect x="972.11" y="224.35" width="0.56" height="0.85" fill="#d4d4d4" opacity="0.42"/><rect x="972.67" y="224.35" width="0.56" height="0.85" fill="#9cdcfe" opacity="0.42"/><rect x="973.24" y="224.35" width="0.56" height="0.85" fill="#d4d4d4" opacity="0.42"/><rect x="974.37" y="224.35" width="0.56" height="0.85" fill="#9cdcfe" opacity="0.42"/><rect x="974.93" y="224.35" width="0.56" height="0.85" fill="#d4d4d4" opacity="0.42"/><rect x="976.06" y="224.35" width="2.82" height="0.85" fill="#9cdcfe" opacity="0.42"/><rect x="978.89" y="224.35" width="0.56" height="0.85" fill="#d4d4d4" opacity="0.42"/><rect x="980.02" y="224.35" width="3.39" height="0.85" fill="#9cdcfe" opacity="0.42"/><rect x="983.41" y="224.35" width="0.56" height="0.85" fill="#d4d4d4" opacity="0.42"/><rect x="984.54" y="224.35" width="2.82" height="0.85" fill="#9cdcfe" opacity="0.42"/><rect x="987.36" y="224.35" width="0.56" height="0.85" fill="#d4d4d4" opacity="0.42"/><rect x="988.49" y="224.35" width="0.56" height="0.85" fill="#d4d4d4" opacity="0.42"/><rect x="964.76" y="225.50" width="1.69" height="0.85" fill="#9cdcfe" opacity="0.42"/><rect x="966.46" y="225.50" width="0.56" height="0.85" fill="#d4d4d4" opacity="0.42"/><rect x="967.02" y="225.50" width="5.08" height="0.85" fill="#dcdcaa" opacity="0.42"/><rect x="972.11" y="225.50" width="0.56" height="0.85" fill="#d4d4d4" opacity="0.42"/><rect x="972.67" y="225.50" width="0.56" height="0.85" fill="#d4d4d4" opacity="0.42"/><rect x="973.24" y="225.50" width="0.56" height="0.85" fill="#d4d4d4" opacity="0.42"/><rect x="964.76" y="226.65" width="1.69" height="0.85" fill="#9cdcfe" opacity="0.42"/><rect x="966.46" y="226.65" width="0.56" height="0.85" fill="#d4d4d4" opacity="0.42"/><rect x="967.02" y="226.65" width="2.26" height="0.85" fill="#dcdcaa" opacity="0.42"/><rect x="969.28" y="226.65" width="0.56" height="0.85" fill="#d4d4d4" opacity="0.42"/><rect x="969.85" y="226.65" width="0.56" height="0.85" fill="#9cdcfe" opacity="0.42"/><rect x="970.41" y="226.65" width="0.56" height="0.85" fill="#d4d4d4" opacity="0.42"/><rect x="971.54" y="226.65" width="0.56" height="0.85" fill="#9cdcfe" opacity="0.42"/><rect x="972.11" y="226.65" width="0.56" height="0.85" fill="#d4d4d4" opacity="0.42"/><rect x="973.24" y="226.65" width="2.82" height="0.85" fill="#9cdcfe" opacity="0.42"/><rect x="976.06" y="226.65" width="0.56" height="0.85" fill="#d4d4d4" opacity="0.42"/><rect x="977.19" y="226.65" width="3.39" height="0.85" fill="#9cdcfe" opacity="0.42"/><rect x="980.58" y="226.65" width="0.56" height="0.85" fill="#d4d4d4" opacity="0.42"/><rect x="981.15" y="226.65" width="0.56" height="0.85" fill="#d4d4d4" opacity="0.42"/><rect x="964.76" y="227.80" width="1.69" height="0.85" fill="#9cdcfe" opacity="0.42"/><rect x="966.46" y="227.80" width="0.56" height="0.85" fill="#d4d4d4" opacity="0.42"/><rect x="967.02" y="227.80" width="5.08" height="0.85" fill="#9cdcfe" opacity="0.42"/><rect x="972.67" y="227.80" width="0.56" height="0.85" fill="#d4d4d4" opacity="0.42"/><rect x="973.80" y="227.80" width="2.82" height="0.85" fill="#9cdcfe" opacity="0.42"/><rect x="976.63" y="227.80" width="0.56" height="0.85" fill="#d4d4d4" opacity="0.42"/><rect x="964.76" y="228.95" width="1.69" height="0.85" fill="#9cdcfe" opacity="0.42"/><rect x="966.46" y="228.95" width="0.56" height="0.85" fill="#d4d4d4" opacity="0.42"/><rect x="967.02" y="228.95" width="2.26" height="0.85" fill="#dcdcaa" opacity="0.42"/><rect x="969.28" y="228.95" width="0.56" height="0.85" fill="#d4d4d4" opacity="0.42"/><rect x="969.85" y="228.95" width="0.56" height="0.85" fill="#d4d4d4" opacity="0.42"/><rect x="970.41" y="228.95" width="0.56" height="0.85" fill="#d4d4d4" opacity="0.42"/><rect x="964.76" y="230.10" width="1.69" height="0.85" fill="#9cdcfe" opacity="0.42"/><rect x="966.46" y="230.10" width="0.56" height="0.85" fill="#d4d4d4" opacity="0.42"/><rect x="967.02" y="230.10" width="5.08" height="0.85" fill="#dcdcaa" opacity="0.42"/><rect x="972.11" y="230.10" width="0.56" height="0.85" fill="#d4d4d4" opacity="0.42"/><rect x="972.67" y="230.10" width="0.56" height="0.85" fill="#d4d4d4" opacity="0.42"/><rect x="973.24" y="230.10" width="0.56" height="0.85" fill="#d4d4d4" opacity="0.42"/><rect x="962.50" y="231.25" width="0.56" height="0.85" fill="#d4d4d4" opacity="0.42"/><rect x="962.50" y="233.55" width="7.34" height="0.85" fill="#6a9955" opacity="0.42"/><rect x="962.50" y="234.70" width="4.52" height="0.85" fill="#569cd6" opacity="0.42"/><rect x="967.59" y="234.70" width="4.52" height="0.85" fill="#dcdcaa" opacity="0.42"/><rect x="972.11" y="234.70" width="0.56" height="0.85" fill="#d4d4d4" opacity="0.42"/><rect x="972.67" y="234.70" width="1.13" height="0.85" fill="#9cdcfe" opacity="0.42"/><rect x="973.80" y="234.70" width="0.56" height="0.85" fill="#d4d4d4" opacity="0.42"/><rect x="974.93" y="234.70" width="1.13" height="0.85" fill="#9cdcfe" opacity="0.42"/><rect x="976.06" y="234.70" width="0.56" height="0.85" fill="#d4d4d4" opacity="0.42"/><rect x="977.19" y="234.70" width="1.13" height="0.85" fill="#9cdcfe" opacity="0.42"/><rect x="978.32" y="234.70" width="0.56" height="0.85" fill="#d4d4d4" opacity="0.42"/><rect x="979.45" y="234.70" width="1.13" height="0.85" fill="#9cdcfe" opacity="0.42"/><rect x="980.58" y="234.70" width="0.56" height="0.85" fill="#d4d4d4" opacity="0.42"/><rect x="981.71" y="234.70" width="2.82" height="0.85" fill="#9cdcfe" opacity="0.42"/><rect x="984.54" y="234.70" width="0.56" height="0.85" fill="#d4d4d4" opacity="0.42"/><rect x="985.67" y="234.70" width="0.56" height="0.85" fill="#d4d4d4" opacity="0.42"/><rect x="964.76" y="235.85" width="1.69" height="0.85" fill="#9cdcfe" opacity="0.42"/><rect x="966.46" y="235.85" width="0.56" height="0.85" fill="#d4d4d4" opacity="0.42"/><rect x="967.02" y="235.85" width="5.08" height="0.85" fill="#dcdcaa" opacity="0.42"/><rect x="972.11" y="235.85" width="0.56" height="0.85" fill="#d4d4d4" opacity="0.42"/><rect x="972.67" y="235.85" width="0.56" height="0.85" fill="#d4d4d4" opacity="0.42"/><rect x="973.24" y="235.85" width="0.56" height="0.85" fill="#d4d4d4" opacity="0.42"/><rect x="964.76" y="237.00" width="1.69" height="0.85" fill="#9cdcfe" opacity="0.42"/><rect x="966.46" y="237.00" width="0.56" height="0.85" fill="#d4d4d4" opacity="0.42"/><rect x="967.02" y="237.00" width="3.39" height="0.85" fill="#dcdcaa" opacity="0.42"/><rect x="970.41" y="237.00" width="0.56" height="0.85" fill="#d4d4d4" opacity="0.42"/><rect x="970.98" y="237.00" width="1.13" height="0.85" fill="#9cdcfe" opacity="0.42"/><rect x="972.11" y="237.00" width="0.56" height="0.85" fill="#d4d4d4" opacity="0.42"/><rect x="973.24" y="237.00" width="1.13" height="0.85" fill="#9cdcfe" opacity="0.42"/><rect x="974.37" y="237.00" width="0.56" height="0.85" fill="#d4d4d4" opacity="0.42"/><rect x="974.93" y="237.00" width="0.56" height="0.85" fill="#d4d4d4" opacity="0.42"/><rect x="964.76" y="238.15" width="1.69" height="0.85" fill="#9cdcfe" opacity="0.42"/><rect x="966.46" y="238.15" width="0.56" height="0.85" fill="#d4d4d4" opacity="0.42"/><rect x="967.02" y="238.15" width="3.39" height="0.85" fill="#dcdcaa" opacity="0.42"/><rect x="970.41" y="238.15" width="0.56" height="0.85" fill="#d4d4d4" opacity="0.42"/><rect x="970.98" y="238.15" width="1.13" height="0.85" fill="#9cdcfe" opacity="0.42"/><rect x="972.11" y="238.15" width="0.56" height="0.85" fill="#d4d4d4" opacity="0.42"/><rect x="973.24" y="238.15" width="1.13" height="0.85" fill="#9cdcfe" opacity="0.42"/><rect x="974.37" y="238.15" width="0.56" height="0.85" fill="#d4d4d4" opacity="0.42"/><rect x="974.93" y="238.15" width="0.56" height="0.85" fill="#d4d4d4" opacity="0.42"/><rect x="964.76" y="239.30" width="1.69" height="0.85" fill="#9cdcfe" opacity="0.42"/><rect x="966.46" y="239.30" width="0.56" height="0.85" fill="#d4d4d4" opacity="0.42"/><rect x="967.02" y="239.30" width="6.21" height="0.85" fill="#9cdcfe" opacity="0.42"/><rect x="973.80" y="239.30" width="0.56" height="0.85" fill="#d4d4d4" opacity="0.42"/><rect x="974.93" y="239.30" width="2.82" height="0.85" fill="#9cdcfe" opacity="0.42"/><rect x="977.76" y="239.30" width="0.56" height="0.85" fill="#d4d4d4" opacity="0.42"/><rect x="964.76" y="240.45" width="1.69" height="0.85" fill="#9cdcfe" opacity="0.42"/><rect x="966.46" y="240.45" width="0.56" height="0.85" fill="#d4d4d4" opacity="0.42"/><rect x="967.02" y="240.45" width="3.39" height="0.85" fill="#dcdcaa" opacity="0.42"/><rect x="970.41" y="240.45" width="0.56" height="0.85" fill="#d4d4d4" opacity="0.42"/><rect x="970.98" y="240.45" width="0.56" height="0.85" fill="#d4d4d4" opacity="0.42"/><rect x="971.54" y="240.45" width="0.56" height="0.85" fill="#d4d4d4" opacity="0.42"/><rect x="964.76" y="241.60" width="1.69" height="0.85" fill="#9cdcfe" opacity="0.42"/><rect x="966.46" y="241.60" width="0.56" height="0.85" fill="#d4d4d4" opacity="0.42"/><rect x="967.02" y="241.60" width="5.08" height="0.85" fill="#dcdcaa" opacity="0.42"/><rect x="972.11" y="241.60" width="0.56" height="0.85" fill="#d4d4d4" opacity="0.42"/><rect x="972.67" y="241.60" width="0.56" height="0.85" fill="#d4d4d4" opacity="0.42"/><rect x="973.24" y="241.60" width="0.56" height="0.85" fill="#d4d4d4" opacity="0.42"/><rect x="962.50" y="242.75" width="0.56" height="0.85" fill="#d4d4d4" opacity="0.42"/><rect x="962.50" y="245.05" width="7.34" height="0.85" fill="#6a9955" opacity="0.42"/><rect x="962.50" y="246.20" width="4.52" height="0.85" fill="#569cd6" opacity="0.42"/><rect x="967.59" y="246.20" width="4.52" height="0.85" fill="#dcdcaa" opacity="0.42"/><rect x="972.11" y="246.20" width="0.56" height="0.85" fill="#d4d4d4" opacity="0.42"/><rect x="972.67" y="246.20" width="2.26" height="0.85" fill="#9cdcfe" opacity="0.42"/><rect x="974.93" y="246.20" width="0.56" height="0.85" fill="#d4d4d4" opacity="0.42"/><rect x="976.06" y="246.20" width="0.56" height="0.85" fill="#9cdcfe" opacity="0.42"/><rect x="976.63" y="246.20" width="0.56" height="0.85" fill="#d4d4d4" opacity="0.42"/><rect x="977.76" y="246.20" width="0.56" height="0.85" fill="#9cdcfe" opacity="0.42"/><rect x="978.32" y="246.20" width="0.56" height="0.85" fill="#d4d4d4" opacity="0.42"/><rect x="979.45" y="246.20" width="2.82" height="0.85" fill="#9cdcfe" opacity="0.42"/><rect x="982.28" y="246.20" width="0.56" height="0.85" fill="#d4d4d4" opacity="0.42"/><rect x="983.41" y="246.20" width="0.56" height="0.85" fill="#d4d4d4" opacity="0.42"/><rect x="964.76" y="247.35" width="1.69" height="0.85" fill="#9cdcfe" opacity="0.42"/><rect x="966.46" y="247.35" width="0.56" height="0.85" fill="#d4d4d4" opacity="0.42"/><rect x="967.02" y="247.35" width="2.26" height="0.85" fill="#9cdcfe" opacity="0.42"/><rect x="969.85" y="247.35" width="0.56" height="0.85" fill="#d4d4d4" opacity="0.42"/><rect x="970.98" y="247.35" width="6.78" height="0.85" fill="#ce9178" opacity="0.42"/><rect x="977.76" y="247.35" width="0.56" height="0.85" fill="#d4d4d4" opacity="0.42"/><rect x="964.76" y="248.50" width="1.69" height="0.85" fill="#9cdcfe" opacity="0.42"/><rect x="966.46" y="248.50" width="0.56" height="0.85" fill="#d4d4d4" opacity="0.42"/><rect x="967.02" y="248.50" width="5.08" height="0.85" fill="#9cdcfe" opacity="0.42"/><rect x="972.67" y="248.50" width="0.56" height="0.85" fill="#d4d4d4" opacity="0.42"/><rect x="973.80" y="248.50" width="2.82" height="0.85" fill="#9cdcfe" opacity="0.42"/><rect x="976.63" y="248.50" width="0.56" height="0.85" fill="#d4d4d4" opacity="0.42"/><rect x="964.76" y="249.65" width="1.69" height="0.85" fill="#9cdcfe" opacity="0.42"/><rect x="966.46" y="249.65" width="0.56" height="0.85" fill="#d4d4d4" opacity="0.42"/><rect x="967.02" y="249.65" width="4.52" height="0.85" fill="#dcdcaa" opacity="0.42"/><rect x="971.54" y="249.65" width="0.56" height="0.85" fill="#d4d4d4" opacity="0.42"/><rect x="972.11" y="249.65" width="2.26" height="0.85" fill="#9cdcfe" opacity="0.42"/><rect x="974.37" y="249.65" width="0.56" height="0.85" fill="#d4d4d4" opacity="0.42"/><rect x="975.50" y="249.65" width="0.56" height="0.85" fill="#9cdcfe" opacity="0.42"/><rect x="976.06" y="249.65" width="0.56" height="0.85" fill="#d4d4d4" opacity="0.42"/><rect x="977.19" y="249.65" width="0.56" height="0.85" fill="#9cdcfe" opacity="0.42"/><rect x="977.76" y="249.65" width="0.56" height="0.85" fill="#d4d4d4" opacity="0.42"/><rect x="978.32" y="249.65" width="0.56" height="0.85" fill="#d4d4d4" opacity="0.42"/><rect x="962.50" y="250.80" width="0.56" height="0.85" fill="#d4d4d4" opacity="0.42"/><rect x="962.50" y="253.10" width="7.91" height="0.85" fill="#6a9955" opacity="0.42"/><rect x="962.50" y="254.25" width="4.52" height="0.85" fill="#569cd6" opacity="0.42"/><rect x="967.59" y="254.25" width="5.08" height="0.85" fill="#dcdcaa" opacity="0.42"/><rect x="972.67" y="254.25" width="0.56" height="0.85" fill="#d4d4d4" opacity="0.42"/><rect x="973.24" y="254.25" width="2.82" height="0.85" fill="#9cdcfe" opacity="0.42"/><rect x="976.06" y="254.25" width="0.56" height="0.85" fill="#d4d4d4" opacity="0.42"/><rect x="977.19" y="254.25" width="0.56" height="0.85" fill="#9cdcfe" opacity="0.42"/><rect x="977.76" y="254.25" width="0.56" height="0.85" fill="#d4d4d4" opacity="0.42"/><rect x="978.89" y="254.25" width="0.56" height="0.85" fill="#9cdcfe" opacity="0.42"/><rect x="979.45" y="254.25" width="0.56" height="0.85" fill="#d4d4d4" opacity="0.42"/><rect x="980.58" y="254.25" width="2.82" height="0.85" fill="#9cdcfe" opacity="0.42"/><rect x="983.41" y="254.25" width="0.56" height="0.85" fill="#d4d4d4" opacity="0.42"/><rect x="984.54" y="254.25" width="3.39" height="0.85" fill="#9cdcfe" opacity="0.42"/><rect x="987.93" y="254.25" width="0.56" height="0.85" fill="#d4d4d4" opacity="0.42"/><rect x="989.06" y="254.25" width="0.56" height="0.85" fill="#d4d4d4" opacity="0.42"/><rect x="964.76" y="255.40" width="1.69" height="0.85" fill="#9cdcfe" opacity="0.42"/><rect x="966.46" y="255.40" width="0.56" height="0.85" fill="#d4d4d4" opacity="0.42"/><rect x="967.02" y="255.40" width="5.08" height="0.85" fill="#dcdcaa" opacity="0.42"/><rect x="972.11" y="255.40" width="0.56" height="0.85" fill="#d4d4d4" opacity="0.42"/><rect x="972.67" y="255.40" width="2.82" height="0.85" fill="#9cdcfe" opacity="0.42"/><rect x="975.50" y="255.40" width="0.56" height="0.85" fill="#d4d4d4" opacity="0.42"/><rect x="976.63" y="255.40" width="0.56" height="0.85" fill="#9cdcfe" opacity="0.42"/><rect x="977.19" y="255.40" width="0.56" height="0.85" fill="#d4d4d4" opacity="0.42"/><rect x="978.32" y="255.40" width="0.56" height="0.85" fill="#9cdcfe" opacity="0.42"/><rect x="978.89" y="255.40" width="0.56" height="0.85" fill="#d4d4d4" opacity="0.42"/><rect x="980.02" y="255.40" width="2.82" height="0.85" fill="#9cdcfe" opacity="0.42"/><rect x="982.84" y="255.40" width="0.56" height="0.85" fill="#d4d4d4" opacity="0.42"/><rect x="983.97" y="255.40" width="3.39" height="0.85" fill="#9cdcfe" opacity="0.42"/><rect x="987.36" y="255.40" width="0.56" height="0.85" fill="#d4d4d4" opacity="0.42"/><rect x="987.93" y="255.40" width="0.56" height="0.85" fill="#d4d4d4" opacity="0.42"/><rect x="962.50" y="256.55" width="0.56" height="0.85" fill="#d4d4d4" opacity="0.42"/><rect x="962.50" y="258.85" width="14.69" height="0.85" fill="#6a9955" opacity="0.42"/><rect x="962.50" y="260.00" width="4.52" height="0.85" fill="#569cd6" opacity="0.42"/><rect x="967.59" y="260.00" width="8.47" height="0.85" fill="#dcdcaa" opacity="0.42"/><rect x="976.06" y="260.00" width="0.56" height="0.85" fill="#d4d4d4" opacity="0.42"/><rect x="976.63" y="260.00" width="2.82" height="0.85" fill="#9cdcfe" opacity="0.42"/><rect x="979.45" y="260.00" width="0.56" height="0.85" fill="#d4d4d4" opacity="0.42"/><rect x="980.58" y="260.00" width="0.56" height="0.85" fill="#9cdcfe" opacity="0.42"/><rect x="981.15" y="260.00" width="0.56" height="0.85" fill="#d4d4d4" opacity="0.42"/><rect x="982.28" y="260.00" width="0.56" height="0.85" fill="#9cdcfe" opacity="0.42"/><rect x="982.84" y="260.00" width="0.56" height="0.85" fill="#d4d4d4" opacity="0.42"/><rect x="983.97" y="260.00" width="2.82" height="0.85" fill="#9cdcfe" opacity="0.42"/><rect x="986.80" y="260.00" width="0.56" height="0.85" fill="#d4d4d4" opacity="0.42"/><rect x="987.93" y="260.00" width="3.39" height="0.85" fill="#9cdcfe" opacity="0.42"/><rect x="991.32" y="260.00" width="0.56" height="0.85" fill="#d4d4d4" opacity="0.42"/><rect x="992.45" y="260.00" width="0.56" height="0.85" fill="#d4d4d4" opacity="0.42"/><rect x="964.76" y="261.15" width="1.69" height="0.85" fill="#9cdcfe" opacity="0.42"/><rect x="966.46" y="261.15" width="0.56" height="0.85" fill="#d4d4d4" opacity="0.42"/><rect x="967.02" y="261.15" width="5.08" height="0.85" fill="#dcdcaa" opacity="0.42"/><rect x="972.11" y="261.15" width="0.56" height="0.85" fill="#d4d4d4" opacity="0.42"/><rect x="972.67" y="261.15" width="2.82" height="0.85" fill="#9cdcfe" opacity="0.42"/><rect x="975.50" y="261.15" width="0.56" height="0.85" fill="#d4d4d4" opacity="0.42"/><rect x="976.63" y="261.15" width="0.56" height="0.85" fill="#9cdcfe" opacity="0.42"/><rect x="977.76" y="261.15" width="0.56" height="0.85" fill="#d4d4d4" opacity="0.42"/><rect x="978.89" y="261.15" width="2.82" height="0.85" fill="#9cdcfe" opacity="0.42"/><rect x="982.28" y="261.15" width="0.56" height="0.85" fill="#d4d4d4" opacity="0.42"/><rect x="983.41" y="261.15" width="0.56" height="0.85" fill="#b5cea8" opacity="0.42"/><rect x="983.97" y="261.15" width="0.56" height="0.85" fill="#d4d4d4" opacity="0.42"/><rect x="985.10" y="261.15" width="0.56" height="0.85" fill="#9cdcfe" opacity="0.42"/><rect x="986.23" y="261.15" width="0.56" height="0.85" fill="#d4d4d4" opacity="0.42"/><rect x="987.36" y="261.15" width="3.39" height="0.85" fill="#9cdcfe" opacity="0.42"/><rect x="991.32" y="261.15" width="0.56" height="0.85" fill="#d4d4d4" opacity="0.42"/><rect x="992.45" y="261.15" width="0.56" height="0.85" fill="#b5cea8" opacity="0.42"/><rect x="993.01" y="261.15" width="0.56" height="0.85" fill="#d4d4d4" opacity="0.42"/><rect x="994.14" y="261.15" width="2.82" height="0.85" fill="#9cdcfe" opacity="0.42"/><rect x="996.97" y="261.15" width="0.56" height="0.85" fill="#d4d4d4" opacity="0.42"/><rect x="998.10" y="261.15" width="3.39" height="0.85" fill="#9cdcfe" opacity="0.42"/><rect x="1001.49" y="261.15" width="0.56" height="0.85" fill="#d4d4d4" opacity="0.42"/><rect x="1002.05" y="261.15" width="0.56" height="0.85" fill="#d4d4d4" opacity="0.42"/><rect x="962.50" y="262.30" width="0.56" height="0.85" fill="#d4d4d4" opacity="0.42"/><rect x="962.50" y="264.60" width="14.69" height="0.85" fill="#6a9955" opacity="0.42"/><rect x="962.50" y="266.90" width="3.95" height="0.85" fill="#d4d4d4" opacity="0.42"/><rect x="962.50" y="269.20" width="4.52" height="0.85" fill="#569cd6" opacity="0.42"/><rect x="967.59" y="269.20" width="5.65" height="0.85" fill="#dcdcaa" opacity="0.42"/><rect x="973.24" y="269.20" width="0.56" height="0.85" fill="#d4d4d4" opacity="0.42"/><rect x="973.80" y="269.20" width="0.56" height="0.85" fill="#9cdcfe" opacity="0.42"/><rect x="974.37" y="269.20" width="0.56" height="0.85" fill="#d4d4d4" opacity="0.42"/><rect x="975.50" y="269.20" width="0.56" height="0.85" fill="#9cdcfe" opacity="0.42"/><rect x="976.06" y="269.20" width="0.56" height="0.85" fill="#d4d4d4" opacity="0.42"/><rect x="977.19" y="269.20" width="3.39" height="0.85" fill="#9cdcfe" opacity="0.42"/><rect x="980.58" y="269.20" width="0.56" height="0.85" fill="#d4d4d4" opacity="0.42"/><rect x="981.71" y="269.20" width="2.82" height="0.85" fill="#9cdcfe" opacity="0.42"/><rect x="984.54" y="269.20" width="0.56" height="0.85" fill="#d4d4d4" opacity="0.42"/><rect x="985.67" y="269.20" width="0.56" height="0.85" fill="#d4d4d4" opacity="0.42"/><rect x="964.76" y="270.35" width="1.69" height="0.85" fill="#9cdcfe" opacity="0.42"/><rect x="966.46" y="270.35" width="0.56" height="0.85" fill="#d4d4d4" opacity="0.42"/><rect x="967.02" y="270.35" width="5.08" height="0.85" fill="#dcdcaa" opacity="0.42"/><rect x="972.11" y="270.35" width="0.56" height="0.85" fill="#d4d4d4" opacity="0.42"/><rect x="972.67" y="270.35" width="0.56" height="0.85" fill="#d4d4d4" opacity="0.42"/><rect x="973.24" y="270.35" width="0.56" height="0.85" fill="#d4d4d4" opacity="0.42"/><rect x="964.76" y="271.50" width="1.69" height="0.85" fill="#9cdcfe" opacity="0.42"/><rect x="966.46" y="271.50" width="0.56" height="0.85" fill="#d4d4d4" opacity="0.42"/><rect x="967.02" y="271.50" width="1.69" height="0.85" fill="#dcdcaa" opacity="0.42"/><rect x="968.72" y="271.50" width="0.56" height="0.85" fill="#d4d4d4" opacity="0.42"/><rect x="969.28" y="271.50" width="0.56" height="0.85" fill="#9cdcfe" opacity="0.42"/><rect x="969.85" y="271.50" width="0.56" height="0.85" fill="#d4d4d4" opacity="0.42"/><rect x="970.98" y="271.50" width="0.56" height="0.85" fill="#9cdcfe" opacity="0.42"/><rect x="971.54" y="271.50" width="0.56" height="0.85" fill="#d4d4d4" opacity="0.42"/><rect x="972.67" y="271.50" width="3.39" height="0.85" fill="#9cdcfe" opacity="0.42"/><rect x="976.06" y="271.50" width="0.56" height="0.85" fill="#d4d4d4" opacity="0.42"/><rect x="977.19" y="271.50" width="0.56" height="0.85" fill="#b5cea8" opacity="0.42"/><rect x="977.76" y="271.50" width="0.56" height="0.85" fill="#d4d4d4" opacity="0.42"/><rect x="978.89" y="271.50" width="2.26" height="0.85" fill="#9cdcfe" opacity="0.42"/><rect x="981.15" y="271.50" width="0.56" height="0.85" fill="#d4d4d4" opacity="0.42"/><rect x="981.71" y="271.50" width="1.13" height="0.85" fill="#4fc1ff" opacity="0.42"/><rect x="983.41" y="271.50" width="0.56" height="0.85" fill="#d4d4d4" opacity="0.42"/><rect x="984.54" y="271.50" width="0.56" height="0.85" fill="#b5cea8" opacity="0.42"/><rect x="985.10" y="271.50" width="0.56" height="0.85" fill="#d4d4d4" opacity="0.42"/><rect x="986.23" y="271.50" width="2.82" height="0.85" fill="#569cd6" opacity="0.42"/><rect x="989.06" y="271.50" width="0.56" height="0.85" fill="#d4d4d4" opacity="0.42"/><rect x="989.62" y="271.50" width="0.56" height="0.85" fill="#d4d4d4" opacity="0.42"/><rect x="964.76" y="272.65" width="1.69" height="0.85" fill="#9cdcfe" opacity="0.42"/><rect x="966.46" y="272.65" width="0.56" height="0.85" fill="#d4d4d4" opacity="0.42"/><rect x="967.02" y="272.65" width="5.08" height="0.85" fill="#9cdcfe" opacity="0.42"/><rect x="972.67" y="272.65" width="0.56" height="0.85" fill="#d4d4d4" opacity="0.42"/><rect x="973.80" y="272.65" width="2.82" height="0.85" fill="#9cdcfe" opacity="0.42"/><rect x="976.63" y="272.65" width="0.56" height="0.85" fill="#d4d4d4" opacity="0.42"/><rect x="964.76" y="273.80" width="1.69" height="0.85" fill="#9cdcfe" opacity="0.42"/><rect x="966.46" y="273.80" width="0.56" height="0.85" fill="#d4d4d4" opacity="0.42"/><rect x="967.02" y="273.80" width="2.26" height="0.85" fill="#dcdcaa" opacity="0.42"/><rect x="969.28" y="273.80" width="0.56" height="0.85" fill="#d4d4d4" opacity="0.42"/><rect x="969.85" y="273.80" width="0.56" height="0.85" fill="#d4d4d4" opacity="0.42"/><rect x="970.41" y="273.80" width="0.56" height="0.85" fill="#d4d4d4" opacity="0.42"/><rect x="964.76" y="274.95" width="1.69" height="0.85" fill="#9cdcfe" opacity="0.42"/><rect x="966.46" y="274.95" width="0.56" height="0.85" fill="#d4d4d4" opacity="0.42"/><rect x="967.02" y="274.95" width="5.08" height="0.85" fill="#dcdcaa" opacity="0.42"/><rect x="972.11" y="274.95" width="0.56" height="0.85" fill="#d4d4d4" opacity="0.42"/><rect x="972.67" y="274.95" width="0.56" height="0.85" fill="#d4d4d4" opacity="0.42"/><rect x="973.24" y="274.95" width="0.56" height="0.85" fill="#d4d4d4" opacity="0.42"/><rect x="962.50" y="276.10" width="0.56" height="0.85" fill="#d4d4d4" opacity="0.42"/><rect x="962.50" y="278.40" width="10.17" height="0.85" fill="#6a9955" opacity="0.42"/><rect x="962.50" y="279.55" width="4.52" height="0.85" fill="#569cd6" opacity="0.42"/><rect x="967.59" y="279.55" width="4.52" height="0.85" fill="#dcdcaa" opacity="0.42"/><rect x="972.11" y="279.55" width="0.56" height="0.85" fill="#d4d4d4" opacity="0.42"/><rect x="972.67" y="279.55" width="0.56" height="0.85" fill="#9cdcfe" opacity="0.42"/><rect x="973.24" y="279.55" width="0.56" height="0.85" fill="#d4d4d4" opacity="0.42"/><rect x="974.37" y="279.55" width="0.56" height="0.85" fill="#9cdcfe" opacity="0.42"/><rect x="974.93" y="279.55" width="0.56" height="0.85" fill="#d4d4d4" opacity="0.42"/><rect x="976.06" y="279.55" width="2.82" height="0.85" fill="#9cdcfe" opacity="0.42"/><rect x="978.89" y="279.55" width="0.56" height="0.85" fill="#d4d4d4" opacity="0.42"/><rect x="980.02" y="279.55" width="3.39" height="0.85" fill="#9cdcfe" opacity="0.42"/><rect x="983.41" y="279.55" width="0.56" height="0.85" fill="#d4d4d4" opacity="0.42"/><rect x="984.54" y="279.55" width="2.82" height="0.85" fill="#9cdcfe" opacity="0.42"/><rect x="987.36" y="279.55" width="0.56" height="0.85" fill="#d4d4d4" opacity="0.42"/><rect x="988.49" y="279.55" width="0.56" height="0.85" fill="#d4d4d4" opacity="0.42"/><rect x="964.76" y="280.70" width="1.69" height="0.85" fill="#9cdcfe" opacity="0.42"/><rect x="966.46" y="280.70" width="0.56" height="0.85" fill="#d4d4d4" opacity="0.42"/><rect x="967.02" y="280.70" width="5.08" height="0.85" fill="#dcdcaa" opacity="0.42"/><rect x="972.11" y="280.70" width="0.56" height="0.85" fill="#d4d4d4" opacity="0.42"/><rect x="972.67" y="280.70" width="0.56" height="0.85" fill="#d4d4d4" opacity="0.42"/><rect x="973.24" y="280.70" width="0.56" height="0.85" fill="#d4d4d4" opacity="0.42"/><rect x="964.76" y="281.85" width="1.69" height="0.85" fill="#9cdcfe" opacity="0.42"/><rect x="966.46" y="281.85" width="0.56" height="0.85" fill="#d4d4d4" opacity="0.42"/><rect x="967.02" y="281.85" width="2.26" height="0.85" fill="#dcdcaa" opacity="0.42"/><rect x="969.28" y="281.85" width="0.56" height="0.85" fill="#d4d4d4" opacity="0.42"/><rect x="969.85" y="281.85" width="0.56" height="0.85" fill="#9cdcfe" opacity="0.42"/><rect x="970.41" y="281.85" width="0.56" height="0.85" fill="#d4d4d4" opacity="0.42"/><rect x="971.54" y="281.85" width="0.56" height="0.85" fill="#9cdcfe" opacity="0.42"/><rect x="972.11" y="281.85" width="0.56" height="0.85" fill="#d4d4d4" opacity="0.42"/><rect x="973.24" y="281.85" width="2.82" height="0.85" fill="#9cdcfe" opacity="0.42"/><rect x="976.06" y="281.85" width="0.56" height="0.85" fill="#d4d4d4" opacity="0.42"/><rect x="977.19" y="281.85" width="3.39" height="0.85" fill="#9cdcfe" opacity="0.42"/><rect x="980.58" y="281.85" width="0.56" height="0.85" fill="#d4d4d4" opacity="0.42"/><rect x="981.15" y="281.85" width="0.56" height="0.85" fill="#d4d4d4" opacity="0.42"/><rect x="964.76" y="283.00" width="1.69" height="0.85" fill="#9cdcfe" opacity="0.42"/><rect x="966.46" y="283.00" width="0.56" height="0.85" fill="#d4d4d4" opacity="0.42"/><rect x="967.02" y="283.00" width="5.08" height="0.85" fill="#9cdcfe" opacity="0.42"/><rect x="972.67" y="283.00" width="0.56" height="0.85" fill="#d4d4d4" opacity="0.42"/><rect x="973.80" y="283.00" width="2.82" height="0.85" fill="#9cdcfe" opacity="0.42"/><rect x="976.63" y="283.00" width="0.56" height="0.85" fill="#d4d4d4" opacity="0.42"/><rect x="964.76" y="284.15" width="1.69" height="0.85" fill="#9cdcfe" opacity="0.42"/><rect x="966.46" y="284.15" width="0.56" height="0.85" fill="#d4d4d4" opacity="0.42"/><rect x="967.02" y="284.15" width="2.26" height="0.85" fill="#dcdcaa" opacity="0.42"/><rect x="969.28" y="284.15" width="0.56" height="0.85" fill="#d4d4d4" opacity="0.42"/><rect x="969.85" y="284.15" width="0.56" height="0.85" fill="#d4d4d4" opacity="0.42"/><rect x="970.41" y="284.15" width="0.56" height="0.85" fill="#d4d4d4" opacity="0.42"/><rect x="964.76" y="285.30" width="1.69" height="0.85" fill="#9cdcfe" opacity="0.42"/><rect x="966.46" y="285.30" width="0.56" height="0.85" fill="#d4d4d4" opacity="0.42"/><rect x="967.02" y="285.30" width="5.08" height="0.85" fill="#dcdcaa" opacity="0.42"/><rect x="972.11" y="285.30" width="0.56" height="0.85" fill="#d4d4d4" opacity="0.42"/><rect x="972.67" y="285.30" width="0.56" height="0.85" fill="#d4d4d4" opacity="0.42"/><rect x="973.24" y="285.30" width="0.56" height="0.85" fill="#d4d4d4" opacity="0.42"/><rect x="962.50" y="286.45" width="0.56" height="0.85" fill="#d4d4d4" opacity="0.42"/><rect x="962.50" y="288.75" width="7.34" height="0.85" fill="#6a9955" opacity="0.42"/><rect x="962.50" y="289.90" width="4.52" height="0.85" fill="#569cd6" opacity="0.42"/><rect x="967.59" y="289.90" width="4.52" height="0.85" fill="#dcdcaa" opacity="0.42"/><rect x="972.11" y="289.90" width="0.56" height="0.85" fill="#d4d4d4" opacity="0.42"/><rect x="972.67" y="289.90" width="1.13" height="0.85" fill="#9cdcfe" opacity="0.42"/><rect x="973.80" y="289.90" width="0.56" height="0.85" fill="#d4d4d4" opacity="0.42"/><rect x="974.93" y="289.90" width="1.13" height="0.85" fill="#9cdcfe" opacity="0.42"/><rect x="976.06" y="289.90" width="0.56" height="0.85" fill="#d4d4d4" opacity="0.42"/><rect x="977.19" y="289.90" width="1.13" height="0.85" fill="#9cdcfe" opacity="0.42"/><rect x="978.32" y="289.90" width="0.56" height="0.85" fill="#d4d4d4" opacity="0.42"/><rect x="979.45" y="289.90" width="1.13" height="0.85" fill="#9cdcfe" opacity="0.42"/><rect x="980.58" y="289.90" width="0.56" height="0.85" fill="#d4d4d4" opacity="0.42"/><rect x="981.71" y="289.90" width="2.82" height="0.85" fill="#9cdcfe" opacity="0.42"/><rect x="984.54" y="289.90" width="0.56" height="0.85" fill="#d4d4d4" opacity="0.42"/><rect x="985.67" y="289.90" width="0.56" height="0.85" fill="#d4d4d4" opacity="0.42"/><rect x="964.76" y="291.05" width="1.69" height="0.85" fill="#9cdcfe" opacity="0.42"/><rect x="966.46" y="291.05" width="0.56" height="0.85" fill="#d4d4d4" opacity="0.42"/><rect x="967.02" y="291.05" width="5.08" height="0.85" fill="#dcdcaa" opacity="0.42"/><rect x="972.11" y="291.05" width="0.56" height="0.85" fill="#d4d4d4" opacity="0.42"/><rect x="972.67" y="291.05" width="0.56" height="0.85" fill="#d4d4d4" opacity="0.42"/><rect x="973.24" y="291.05" width="0.56" height="0.85" fill="#d4d4d4" opacity="0.42"/><rect x="964.76" y="292.20" width="1.69" height="0.85" fill="#9cdcfe" opacity="0.42"/><rect x="966.46" y="292.20" width="0.56" height="0.85" fill="#d4d4d4" opacity="0.42"/><rect x="967.02" y="292.20" width="3.39" height="0.85" fill="#dcdcaa" opacity="0.42"/><rect x="970.41" y="292.20" width="0.56" height="0.85" fill="#d4d4d4" opacity="0.42"/><rect x="970.98" y="292.20" width="1.13" height="0.85" fill="#9cdcfe" opacity="0.42"/><rect x="972.11" y="292.20" width="0.56" height="0.85" fill="#d4d4d4" opacity="0.42"/><rect x="973.24" y="292.20" width="1.13" height="0.85" fill="#9cdcfe" opacity="0.42"/><rect x="974.37" y="292.20" width="0.56" height="0.85" fill="#d4d4d4" opacity="0.42"/><rect x="974.93" y="292.20" width="0.56" height="0.85" fill="#d4d4d4" opacity="0.42"/><rect x="964.76" y="293.35" width="1.69" height="0.85" fill="#9cdcfe" opacity="0.42"/><rect x="966.46" y="293.35" width="0.56" height="0.85" fill="#d4d4d4" opacity="0.42"/><rect x="967.02" y="293.35" width="3.39" height="0.85" fill="#dcdcaa" opacity="0.42"/><rect x="970.41" y="293.35" width="0.56" height="0.85" fill="#d4d4d4" opacity="0.42"/><rect x="970.98" y="293.35" width="1.13" height="0.85" fill="#9cdcfe" opacity="0.42"/><rect x="972.11" y="293.35" width="0.56" height="0.85" fill="#d4d4d4" opacity="0.42"/><rect x="973.24" y="293.35" width="1.13" height="0.85" fill="#9cdcfe" opacity="0.42"/><rect x="974.37" y="293.35" width="0.56" height="0.85" fill="#d4d4d4" opacity="0.42"/><rect x="974.93" y="293.35" width="0.56" height="0.85" fill="#d4d4d4" opacity="0.42"/><rect x="964.76" y="294.50" width="1.69" height="0.85" fill="#9cdcfe" opacity="0.42"/><rect x="966.46" y="294.50" width="0.56" height="0.85" fill="#d4d4d4" opacity="0.42"/><rect x="967.02" y="294.50" width="6.21" height="0.85" fill="#9cdcfe" opacity="0.42"/><rect x="973.80" y="294.50" width="0.56" height="0.85" fill="#d4d4d4" opacity="0.42"/><rect x="974.93" y="294.50" width="2.82" height="0.85" fill="#9cdcfe" opacity="0.42"/><rect x="977.76" y="294.50" width="0.56" height="0.85" fill="#d4d4d4" opacity="0.42"/><rect x="964.76" y="295.65" width="1.69" height="0.85" fill="#9cdcfe" opacity="0.42"/><rect x="966.46" y="295.65" width="0.56" height="0.85" fill="#d4d4d4" opacity="0.42"/><rect x="967.02" y="295.65" width="3.39" height="0.85" fill="#dcdcaa" opacity="0.42"/><rect x="970.41" y="295.65" width="0.56" height="0.85" fill="#d4d4d4" opacity="0.42"/><rect x="970.98" y="295.65" width="0.56" height="0.85" fill="#d4d4d4" opacity="0.42"/><rect x="971.54" y="295.65" width="0.56" height="0.85" fill="#d4d4d4" opacity="0.42"/><rect x="964.76" y="296.80" width="1.69" height="0.85" fill="#9cdcfe" opacity="0.42"/><rect x="966.46" y="296.80" width="0.56" height="0.85" fill="#d4d4d4" opacity="0.42"/><rect x="967.02" y="296.80" width="5.08" height="0.85" fill="#dcdcaa" opacity="0.42"/><rect x="972.11" y="296.80" width="0.56" height="0.85" fill="#d4d4d4" opacity="0.42"/><rect x="972.67" y="296.80" width="0.56" height="0.85" fill="#d4d4d4" opacity="0.42"/><rect x="973.24" y="296.80" width="0.56" height="0.85" fill="#d4d4d4" opacity="0.42"/><rect x="962.50" y="297.95" width="0.56" height="0.85" fill="#d4d4d4" opacity="0.42"/><rect x="962.50" y="300.25" width="7.34" height="0.85" fill="#6a9955" opacity="0.42"/><rect x="962.50" y="301.40" width="4.52" height="0.85" fill="#569cd6" opacity="0.42"/><rect x="967.59" y="301.40" width="4.52" height="0.85" fill="#dcdcaa" opacity="0.42"/><rect x="972.11" y="301.40" width="0.56" height="0.85" fill="#d4d4d4" opacity="0.42"/><rect x="972.67" y="301.40" width="2.26" height="0.85" fill="#9cdcfe" opacity="0.42"/><rect x="974.93" y="301.40" width="0.56" height="0.85" fill="#d4d4d4" opacity="0.42"/><rect x="976.06" y="301.40" width="0.56" height="0.85" fill="#9cdcfe" opacity="0.42"/><rect x="976.63" y="301.40" width="0.56" height="0.85" fill="#d4d4d4" opacity="0.42"/><rect x="977.76" y="301.40" width="0.56" height="0.85" fill="#9cdcfe" opacity="0.42"/><rect x="978.32" y="301.40" width="0.56" height="0.85" fill="#d4d4d4" opacity="0.42"/><rect x="979.45" y="301.40" width="2.82" height="0.85" fill="#9cdcfe" opacity="0.42"/><rect x="982.28" y="301.40" width="0.56" height="0.85" fill="#d4d4d4" opacity="0.42"/><rect x="983.41" y="301.40" width="0.56" height="0.85" fill="#d4d4d4" opacity="0.42"/><rect x="964.76" y="302.55" width="1.69" height="0.85" fill="#9cdcfe" opacity="0.42"/><rect x="966.46" y="302.55" width="0.56" height="0.85" fill="#d4d4d4" opacity="0.42"/><rect x="967.02" y="302.55" width="2.26" height="0.85" fill="#9cdcfe" opacity="0.42"/><rect x="969.85" y="302.55" width="0.56" height="0.85" fill="#d4d4d4" opacity="0.42"/><rect x="970.98" y="302.55" width="6.78" height="0.85" fill="#ce9178" opacity="0.42"/><rect x="977.76" y="302.55" width="0.56" height="0.85" fill="#d4d4d4" opacity="0.42"/><rect x="964.76" y="303.70" width="1.69" height="0.85" fill="#9cdcfe" opacity="0.42"/><rect x="966.46" y="303.70" width="0.56" height="0.85" fill="#d4d4d4" opacity="0.42"/><rect x="967.02" y="303.70" width="5.08" height="0.85" fill="#9cdcfe" opacity="0.42"/><rect x="972.67" y="303.70" width="0.56" height="0.85" fill="#d4d4d4" opacity="0.42"/><rect x="973.80" y="303.70" width="2.82" height="0.85" fill="#9cdcfe" opacity="0.42"/><rect x="976.63" y="303.70" width="0.56" height="0.85" fill="#d4d4d4" opacity="0.42"/><g fill="none" stroke="#ffffff" stroke-width="0.8"><circle cx="12.3" cy="623.3" r="3"/><path d="M10.9 621.9 L13.7 624.7 M13.7 621.9 L10.9 624.7"/><path d="M29.5 620.2 L32.3 625.5 H26.7 Z"/></g><g fill="none" stroke="#ffffff" stroke-width="0.8"><circle cx="904" cy="623.2" r="2.6"/><circle cx="904" cy="623.2" r="1" fill="#fff"/><path d="M944.6 622.3 L946.9 625.2 L951 619.6"/><path d="M979.6 626 V622 Q979.6 619.3 983 619.3 Q986.5 619.3 986.5 622 V626"/><path d="M980.8 621.3 h2 v2.2 h-2 Z M983.2 621.3 h2 v2.2 h-2 Z"/><path d="M997.2 626 L998.4 622.6 H1003.6 L1004.2 620 H998.4"/><path d="M1014.6 626 V622.3 Q1014.6 619.2 1017.6 619.2 Q1020.6 619.2 1020.6 622.3 V626"/></g></svg>
<div id="fg"><div class="t" style="left:0px;top:4.2px;font-size:7.2px;color:#c4c4c4;width:1030px;text-align:center">script.js — Codex Experiments</div><div class="t" style="left:16.9px;top:31.3px;font-size:5.6px;color:#ffffff;line-height:7px">1</div><div class="t" style="left:38.8px;top:22.0px;font-size:6.6px;color:#bdbdbd;letter-spacing:-0.4px">EXPLORER</div><div class="t" style="left:38.8px;top:38.6px;font-size:6.5px;color:#cccccc;font-weight:bold;letter-spacing:-0.05px">CODEX EXPERIMENTS</div><div class="t" style="left:47px;top:51.8px;font-size:8.3px;color:#cccccc;letter-spacing:-0.25px">home.html</div><div class="t" style="left:47px;top:63.9px;font-size:8.3px;color:#cccccc;letter-spacing:-0.22px">script.js</div><div class="t" style="left:39px;top:581.8px;font-size:6.7px;color:#cccccc;font-weight:bold;letter-spacing:-0.1px">OUTLINE</div><div class="t" style="left:39px;top:594.4px;font-size:6.7px;color:#cccccc;font-weight:bold;letter-spacing:-0.1px">TIMELINE</div><div class="t" style="left:39px;top:606.8px;font-size:6.7px;color:#cccccc;font-weight:bold;letter-spacing:-0.1px">METADATA</div><div class="t" style="left:148px;top:22.5px;font-size:8.1px;color:#ffffff;letter-spacing:-0.18px">script.js</div><div class="t" style="left:151px;top:39.0px;font-size:8.1px;color:#a9a9a9;letter-spacing:-0.18px">script.js</div><div class="m" style="left:129px;top:50.2px;font-size:7.3px;color:#858585;width:24px;text-align:right">1</div><div class="m" style="left:129px;top:60.550000000000004px;font-size:7.3px;color:#c6c6c6;width:24px;text-align:right">2</div><div class="m" style="left:167.3px;top:50.2px;font-size:7.3px;color:#6a9955;">//draw a circle</div><div class="m" style="left:167.3px;top:60.550000000000004px;font-size:7.3px;color:#727272;font-style:italic">function drawCircle(x, y, radius, color) {</div><div class="t" style="left:524px;top:22.9px;font-size:8.6px;color:#f07868;font-style:italic;letter-spacing:-0.27px">GitHub Copilot 4</div><div class="t" style="left:544px;top:77.89999999999999px;font-size:6.2px;color:#9a9a9a;">Accept Solution</div><div class="m" style="left:500px;top:37.55px;width:28.8px;text-align:right;color:#c6c6c6">1</div><div class="m" style="left:544px;top:37.55px"><span style="color:#9cdcfe">Synthesizing</span> <span style="color:#b5cea8">10/10</span> <span style="color:#dcdcaa">solutions</span> <span style="color:#d4d4d4">(</span><span style="color:#9cdcfe">Duplicates</span> <span style="color:#9cdcfe">hidden</span><span style="color:#d4d4d4">)</span></div><div class="m" style="left:500px;top:47.90px;width:28.8px;text-align:right;color:#858585">2</div><div class="m" style="left:544px;top:47.90px"></div><div class="m" style="left:500px;top:58.25px;width:28.8px;text-align:right;color:#858585">3</div><div class="m" style="left:544px;top:58.25px"><span style="color:#d4d4d4">=======</span></div><div class="m" style="left:500px;top:68.60px;width:28.8px;text-align:right;color:#858585">4</div><div class="m" style="left:544px;top:68.60px"></div><div class="m" style="left:500px;top:88.85px;width:28.8px;text-align:right;color:#858585">5</div><div class="m" style="left:544px;top:88.85px"><span style="color:#569cd6">function</span> <span style="color:#dcdcaa">drawCircle</span><span style="color:#d4d4d4">(</span><span style="color:#9cdcfe">x</span><span style="color:#d4d4d4">,</span> <span style="color:#9cdcfe">y</span><span style="color:#d4d4d4">,</span> <span style="color:#9cdcfe">radius</span><span style="color:#d4d4d4">,</span> <span style="color:#9cdcfe">color</span><span style="color:#d4d4d4">)</span> <span style="color:#d4d4d4">{</span></div><div class="m" style="left:500px;top:99.20px;width:28.8px;text-align:right;color:#858585">6</div><div class="m" style="left:544px;top:99.20px">    <span style="color:#9cdcfe">ctx</span><span style="color:#d4d4d4">.</span><span style="color:#dcdcaa">beginPath</span><span style="color:#d4d4d4">(</span><span style="color:#d4d4d4">)</span><span style="color:#d4d4d4">;</span></div><div class="m" style="left:500px;top:109.55px;width:28.8px;text-align:right;color:#858585">7</div><div class="m" style="left:544px;top:109.55px">    <span style="color:#9cdcfe">ctx</span><span style="color:#d4d4d4">.</span><span style="color:#dcdcaa">arc</span><span style="color:#d4d4d4">(</span><span style="color:#9cdcfe">x</span><span style="color:#d4d4d4">,</span> <span style="color:#9cdcfe">y</span><span style="color:#d4d4d4">,</span> <span style="color:#9cdcfe">radius</span><span style="color:#d4d4d4">,</span> <span style="color:#b5cea8">0</span><span style="color:#d4d4d4">,</span> <span style="color:#9cdcfe">Math</span><span style="color:#d4d4d4">.</span><span style="color:#4fc1ff">PI</span> <span style="color:#d4d4d4">*</span> <span style="color:#b5cea8">2</span><span style="color:#d4d4d4">,</span> <span style="color:#569cd6">false</span><span style="color:#d4d4d4">)</span><span style="color:#d4d4d4">;</span></div><div class="m" style="left:500px;top:119.90px;width:28.8px;text-align:right;color:#858585">8</div><div class="m" style="left:544px;top:119.90px">    <span style="color:#9cdcfe">ctx</span><span style="color:#d4d4d4">.</span><span style="color:#9cdcfe">fillStyle</span> <span style="color:#d4d4d4">=</span> <span style="color:#9cdcfe">color</span><span style="color:#d4d4d4">;</span></div><div class="m" style="left:500px;top:130.25px;width:28.8px;text-align:right;color:#858585">9</div><div class="m" style="left:544px;top:130.25px">    <span style="color:#9cdcfe">ctx</span><span style="color:#d4d4d4">.</span><span style="color:#dcdcaa">fill</span><span style="color:#d4d4d4">(</span><span style="color:#d4d4d4">)</span><span style="color:#d4d4d4">;</span></div><div class="m" style="left:500px;top:140.60px;width:28.8px;text-align:right;color:#858585">10</div><div class="m" style="left:544px;top:140.60px">    <span style="color:#9cdcfe">ctx</span><span style="color:#d4d4d4">.</span><span style="color:#dcdcaa">closePath</span><span style="color:#d4d4d4">(</span><span style="color:#d4d4d4">)</span><span style="color:#d4d4d4">;</span></div><div class="m" style="left:500px;top:150.95px;width:28.8px;text-align:right;color:#858585">11</div><div class="m" style="left:544px;top:150.95px"><span style="color:#d4d4d4">}</span></div><div class="m" style="left:500px;top:161.30px;width:28.8px;text-align:right;color:#858585">12</div><div class="m" style="left:544px;top:161.30px"></div><div class="m" style="left:500px;top:171.65px;width:28.8px;text-align:right;color:#858585">13</div><div class="m" style="left:544px;top:171.65px"><span style="color:#6a9955">//draw a rectangle</span></div><div class="m" style="left:500px;top:182.00px;width:28.8px;text-align:right;color:#858585">14</div><div class="m" style="left:544px;top:182.00px"><span style="color:#569cd6">function</span> <span style="color:#dcdcaa">drawRect</span><span style="color:#d4d4d4">(</span><span style="color:#9cdcfe">x</span><span style="color:#d4d4d4">,</span> <span style="color:#9cdcfe">y</span><span style="color:#d4d4d4">,</span> <span style="color:#9cdcfe">width</span><span style="color:#d4d4d4">,</span> <span style="color:#9cdcfe">height</span><span style="color:#d4d4d4">,</span> <span style="color:#9cdcfe">color</span><span style="color:#d4d4d4">)</span> <span style="color:#d4d4d4">{</span></div><div class="m" style="left:500px;top:192.35px;width:28.8px;text-align:right;color:#858585">15</div><div class="m" style="left:544px;top:192.35px">    <span style="color:#9cdcfe">ctx</span><span style="color:#d4d4d4">.</span><span style="color:#dcdcaa">beginPath</span><span style="color:#d4d4d4">(</span><span style="color:#d4d4d4">)</span><span style="color:#d4d4d4">;</span></div><div class="m" style="left:500px;top:202.70px;width:28.8px;text-align:right;color:#858585">16</div><div class="m" style="left:544px;top:202.70px">    <span style="color:#9cdcfe">ctx</span><span style="color:#d4d4d4">.</span><span style="color:#dcdcaa">rect</span><span style="color:#d4d4d4">(</span><span style="color:#9cdcfe">x</span><span style="color:#d4d4d4">,</span> <span style="color:#9cdcfe">y</span><span style="color:#d4d4d4">,</span> <span style="color:#9cdcfe">width</span><span style="color:#d4d4d4">,</span> <span style="color:#9cdcfe">height</span><span style="color:#d4d4d4">)</span><span style="color:#d4d4d4">;</span></div><div class="m" style="left:500px;top:213.05px;width:28.8px;text-align:right;color:#858585">17</div><div class="m" style="left:544px;top:213.05px">    <span style="color:#9cdcfe">ctx</span><span style="color:#d4d4d4">.</span><span style="color:#9cdcfe">fillStyle</span> <span style="color:#d4d4d4">=</span> <span style="color:#9cdcfe">color</span><span style="color:#d4d4d4">;</span></div><div class="m" style="left:500px;top:223.40px;width:28.8px;text-align:right;color:#858585">18</div><div class="m" style="left:544px;top:223.40px">    <span style="color:#9cdcfe">ctx</span><span style="color:#d4d4d4">.</span><span style="color:#dcdcaa">fill</span><span style="color:#d4d4d4">(</span><span style="color:#d4d4d4">)</span><span style="color:#d4d4d4">;</span></div><div class="m" style="left:500px;top:233.75px;width:28.8px;text-align:right;color:#858585">19</div><div class="m" style="left:544px;top:233.75px">    <span style="color:#9cdcfe">ctx</span><span style="color:#d4d4d4">.</span><span style="color:#dcdcaa">closePath</span><span style="color:#d4d4d4">(</span><span style="color:#d4d4d4">)</span><span style="color:#d4d4d4">;</span></div><div class="m" style="left:500px;top:244.10px;width:28.8px;text-align:right;color:#858585">20</div><div class="m" style="left:544px;top:244.10px"><span style="color:#d4d4d4">}</span></div><div class="m" style="left:500px;top:254.45px;width:28.8px;text-align:right;color:#858585">21</div><div class="m" style="left:544px;top:254.45px"></div><div class="m" style="left:500px;top:264.80px;width:28.8px;text-align:right;color:#858585">22</div><div class="m" style="left:544px;top:264.80px"><span style="color:#6a9955">//draw a line</span></div><div class="m" style="left:500px;top:275.15px;width:28.8px;text-align:right;color:#858585">23</div><div class="m" style="left:544px;top:275.15px"><span style="color:#569cd6">function</span> <span style="color:#dcdcaa">drawLine</span><span style="color:#d4d4d4">(</span><span style="color:#9cdcfe">x1</span><span style="color:#d4d4d4">,</span> <span style="color:#9cdcfe">y1</span><span style="color:#d4d4d4">,</span> <span style="color:#9cdcfe">x2</span><span style="color:#d4d4d4">,</span> <span style="color:#9cdcfe">y2</span><span style="color:#d4d4d4">,</span> <span style="color:#9cdcfe">color</span><span style="color:#d4d4d4">)</span> <span style="color:#d4d4d4">{</span></div><div class="m" style="left:500px;top:285.50px;width:28.8px;text-align:right;color:#858585">24</div><div class="m" style="left:544px;top:285.50px">    <span style="color:#9cdcfe">ctx</span><span style="color:#d4d4d4">.</span><span style="color:#dcdcaa">beginPath</span><span style="color:#d4d4d4">(</span><span style="color:#d4d4d4">)</span><span style="color:#d4d4d4">;</span></div><div class="m" style="left:500px;top:295.85px;width:28.8px;text-align:right;color:#858585">25</div><div class="m" style="left:544px;top:295.85px">    <span style="color:#9cdcfe">ctx</span><span style="color:#d4d4d4">.</span><span style="color:#dcdcaa">moveTo</span><span style="color:#d4d4d4">(</span><span style="color:#9cdcfe">x1</span><span style="color:#d4d4d4">,</span> <span style="color:#9cdcfe">y1</span><span style="color:#d4d4d4">)</span><span style="color:#d4d4d4">;</span></div><div class="m" style="left:500px;top:306.20px;width:28.8px;text-align:right;color:#858585">26</div><div class="m" style="left:544px;top:306.20px">    <span style="color:#9cdcfe">ctx</span><span style="color:#d4d4d4">.</span><span style="color:#dcdcaa">lineTo</span><span style="color:#d4d4d4">(</span><span style="color:#9cdcfe">x2</span><span style="color:#d4d4d4">,</span> <span style="color:#9cdcfe">y2</span><span style="color:#d4d4d4">)</span><span style="color:#d4d4d4">;</span></div><div class="m" style="left:500px;top:316.55px;width:28.8px;text-align:right;color:#858585">27</div><div class="m" style="left:544px;top:316.55px">    <span style="color:#9cdcfe">ctx</span><span style="color:#d4d4d4">.</span><span style="color:#9cdcfe">strokeStyle</span> <span style="color:#d4d4d4">=</span> <span style="color:#9cdcfe">color</span><span style="color:#d4d4d4">;</span></div><div class="m" style="left:500px;top:326.90px;width:28.8px;text-align:right;color:#858585">28</div><div class="m" style="left:544px;top:326.90px">    <span style="color:#9cdcfe">ctx</span><span style="color:#d4d4d4">.</span><span style="color:#dcdcaa">stroke</span><span style="color:#d4d4d4">(</span><span style="color:#d4d4d4">)</span><span style="color:#d4d4d4">;</span></div><div class="m" style="left:500px;top:337.25px;width:28.8px;text-align:right;color:#858585">29</div><div class="m" style="left:544px;top:337.25px">    <span style="color:#9cdcfe">ctx</span><span style="color:#d4d4d4">.</span><span style="color:#dcdcaa">closePath</span><span style="color:#d4d4d4">(</span><span style="color:#d4d4d4">)</span><span style="color:#d4d4d4">;</span></div><div class="m" style="left:500px;top:347.60px;width:28.8px;text-align:right;color:#858585">30</div><div class="m" style="left:544px;top:347.60px"><span style="color:#d4d4d4">}</span></div><div class="m" style="left:500px;top:357.95px;width:28.8px;text-align:right;color:#858585">31</div><div class="m" style="left:544px;top:357.95px"></div><div class="m" style="left:500px;top:368.30px;width:28.8px;text-align:right;color:#858585">32</div><div class="m" style="left:544px;top:368.30px"><span style="color:#6a9955">//draw a text</span></div><div class="m" style="left:500px;top:378.65px;width:28.8px;text-align:right;color:#858585">33</div><div class="m" style="left:544px;top:378.65px"><span style="color:#569cd6">function</span> <span style="color:#dcdcaa">drawText</span><span style="color:#d4d4d4">(</span><span style="color:#9cdcfe">text</span><span style="color:#d4d4d4">,</span> <span style="color:#9cdcfe">x</span><span style="color:#d4d4d4">,</span> <span style="color:#9cdcfe">y</span><span style="color:#d4d4d4">,</span> <span style="color:#9cdcfe">color</span><span style="color:#d4d4d4">)</span> <span style="color:#d4d4d4">{</span></div><div class="m" style="left:500px;top:389.00px;width:28.8px;text-align:right;color:#858585">34</div><div class="m" style="left:544px;top:389.00px">    <span style="color:#9cdcfe">ctx</span><span style="color:#d4d4d4">.</span><span style="color:#9cdcfe">font</span> <span style="color:#d4d4d4">=</span> <span style="color:#ce9178">&quot;30px Arial&quot;</span><span style="color:#d4d4d4">;</span></div><div class="m" style="left:500px;top:399.35px;width:28.8px;text-align:right;color:#858585">35</div><div class="m" style="left:544px;top:399.35px">    <span style="color:#9cdcfe">ctx</span><span style="color:#d4d4d4">.</span><span style="color:#9cdcfe">fillStyle</span> <span style="color:#d4d4d4">=</span> <span style="color:#9cdcfe">color</span><span style="color:#d4d4d4">;</span></div><div class="m" style="left:500px;top:409.70px;width:28.8px;text-align:right;color:#858585">36</div><div class="m" style="left:544px;top:409.70px">    <span style="color:#9cdcfe">ctx</span><span style="color:#d4d4d4">.</span><span style="color:#dcdcaa">fillText</span><span style="color:#d4d4d4">(</span><span style="color:#9cdcfe">text</span><span style="color:#d4d4d4">,</span> <span style="color:#9cdcfe">x</span><span style="color:#d4d4d4">,</span> <span style="color:#9cdcfe">y</span><span style="color:#d4d4d4">)</span><span style="color:#d4d4d4">;</span></div><div class="m" style="left:500px;top:420.05px;width:28.8px;text-align:right;color:#858585">37</div><div class="m" style="left:544px;top:420.05px"><span style="color:#d4d4d4">}</span></div><div class="m" style="left:500px;top:430.40px;width:28.8px;text-align:right;color:#858585">38</div><div class="m" style="left:544px;top:430.40px"></div><div class="m" style="left:500px;top:440.75px;width:28.8px;text-align:right;color:#858585">39</div><div class="m" style="left:544px;top:440.75px"><span style="color:#6a9955">//draw a image</span></div><div class="m" style="left:500px;top:451.10px;width:28.8px;text-align:right;color:#858585">40</div><div class="m" style="left:544px;top:451.10px"><span style="color:#569cd6">function</span> <span style="color:#dcdcaa">drawImage</span><span style="color:#d4d4d4">(</span><span style="color:#9cdcfe">image</span><span style="color:#d4d4d4">,</span> <span style="color:#9cdcfe">x</span><span style="color:#d4d4d4">,</span> <span style="color:#9cdcfe">y</span><span style="color:#d4d4d4">,</span> <span style="color:#9cdcfe">width</span><span style="color:#d4d4d4">,</span> <span style="color:#9cdcfe">height</span><span style="color:#d4d4d4">)</span> <span style="color:#d4d4d4">{</span></div><div class="m" style="left:500px;top:461.45px;width:28.8px;text-align:right;color:#858585">41</div><div class="m" style="left:544px;top:461.45px">    <span style="color:#9cdcfe">ctx</span><span style="color:#d4d4d4">.</span><span style="color:#dcdcaa">drawImage</span><span style="color:#d4d4d4">(</span><span style="color:#9cdcfe">image</span><span style="color:#d4d4d4">,</span> <span style="color:#9cdcfe">x</span><span style="color:#d4d4d4">,</span> <span style="color:#9cdcfe">y</span><span style="color:#d4d4d4">,</span> <span style="color:#9cdcfe">width</span><span style="color:#d4d4d4">,</span> <span style="color:#9cdcfe">height</span><span style="color:#d4d4d4">)</span><span style="color:#d4d4d4">;</span></div><div class="m" style="left:500px;top:471.80px;width:28.8px;text-align:right;color:#858585">42</div><div class="m" style="left:544px;top:471.80px"><span style="color:#d4d4d4">}</span></div><div class="m" style="left:500px;top:482.15px;width:28.8px;text-align:right;color:#858585">43</div><div class="m" style="left:544px;top:482.15px"></div><div class="m" style="left:500px;top:492.50px;width:28.8px;text-align:right;color:#858585">44</div><div class="m" style="left:544px;top:492.50px"><span style="color:#6a9955">//draw a image with center</span></div><div class="m" style="left:500px;top:502.85px;width:28.8px;text-align:right;color:#858585">45</div><div class="m" style="left:544px;top:502.85px"><span style="color:#569cd6">function</span> <span style="color:#dcdcaa">drawImageCenter</span><span style="color:#d4d4d4">(</span><span style="color:#9cdcfe">image</span><span style="color:#d4d4d4">,</span> <span style="color:#9cdcfe">x</span><span style="color:#d4d4d4">,</span> <span style="color:#9cdcfe">y</span><span style="color:#d4d4d4">,</span> <span style="color:#9cdcfe">width</span><span style="color:#d4d4d4">,</span> <span style="color:#9cdcfe">height</span><span style="color:#d4d4d4">)</span> <span style="color:#d4d4d4">{</span></div><div class="m" style="left:500px;top:513.20px;width:28.8px;text-align:right;color:#858585">46</div><div class="m" style="left:544px;top:513.20px">    <span style="color:#9cdcfe">ctx</span><span style="color:#d4d4d4">.</span><span style="color:#dcdcaa">drawImage</span><span style="color:#d4d4d4">(</span><span style="color:#9cdcfe">image</span><span style="color:#d4d4d4">,</span> <span style="color:#9cdcfe">x</span> <span style="color:#d4d4d4">-</span> <span style="color:#9cdcfe">width</span> <span style="color:#d4d4d4">/</span> <span style="color:#b5cea8">2</span><span style="color:#d4d4d4">,</span> <span style="color:#9cdcfe">y</span> <span style="color:#d4d4d4">-</span> <span style="color:#9cdcfe">height</span> <span style="color:#d4d4d4">/</span> <span style="color:#b5cea8">2</span><span style="color:#d4d4d4">,</span> <span style="color:#9cdcfe">width</span><span style="color:#d4d4d4">,</span> <span style="color:#9cdcfe">height</span><span style="color:#d4d4d4">)</span><span style="color:#d4d4d4">;</span></div><div class="m" style="left:500px;top:523.55px;width:28.8px;text-align:right;color:#858585">47</div><div class="m" style="left:544px;top:523.55px"><span style="color:#d4d4d4">}</span></div><div class="m" style="left:500px;top:533.90px;width:28.8px;text-align:right;color:#858585">48</div><div class="m" style="left:544px;top:533.90px"></div><div class="m" style="left:500px;top:544.25px;width:28.8px;text-align:right;color:#858585">49</div><div class="m" style="left:544px;top:544.25px"><span style="color:#6a9955">//draw a image with center</span></div><div class="m" style="left:500px;top:554.60px;width:28.8px;text-align:right;color:#858585">50</div><div class="m" style="left:544px;top:554.60px"><span style="color:#569cd6">function</span> <span style="color:#dcdcaa">drawImageCenterX</span><span style="color:#d4d4d4">(</span><span style="color:#9cdcfe">image</span><span style="color:#d4d4d4">,</span> <span style="color:#9cdcfe">x</span><span style="color:#d4d4d4">,</span> <span style="color:#9cdcfe">y</span><span style="color:#d4d4d4">,</span> <span style="color:#9cdcfe">width</span><span style="color:#d4d4d4">,</span> <span style="color:#9cdcfe">height</span><span style="color:#d4d4d4">)</span> <span style="color:#d4d4d4">{</span></div><div class="m" style="left:500px;top:564.95px;width:28.8px;text-align:right;color:#858585">51</div><div class="m" style="left:544px;top:564.95px">    <span style="color:#9cdcfe">ctx</span><span style="color:#d4d4d4">.</span><span style="color:#dcdcaa">drawImage</span><span style="color:#d4d4d4">(</span><span style="color:#9cdcfe">image</span><span style="color:#d4d4d4">,</span> <span style="color:#9cdcfe">x</span> <span style="color:#d4d4d4">-</span> <span style="color:#9cdcfe">width</span> <span style="color:#d4d4d4">/</span> <span style="color:#b5cea8">2</span><span style="color:#d4d4d4">,</span> <span style="color:#9cdcfe">y</span><span style="color:#d4d4d4">,</span> <span style="color:#9cdcfe">width</span><span style="color:#d4d4d4">,</span> <span style="color:#9cdcfe">height</span><span style="color:#d4d4d4">)</span><span style="color:#d4d4d4">;</span></div><div class="m" style="left:500px;top:575.30px;width:28.8px;text-align:right;color:#858585">52</div><div class="m" style="left:544px;top:575.30px"><span style="color:#d4d4d4">}</span></div><div class="m" style="left:500px;top:585.65px;width:28.8px;text-align:right;color:#858585">53</div><div class="m" style="left:544px;top:585.65px"></div><div class="m" style="left:500px;top:596.00px;width:28.8px;text-align:right;color:#858585">54</div><div class="m" style="left:544px;top:596.00px"><span style="color:#6a9955">//draw a image with center</span></div><div class="m" style="left:500px;top:606.35px;width:28.8px;text-align:right;color:#858585">55</div><div class="m" style="left:544px;top:606.35px"><span style="color:#569cd6">function</span> <span style="color:#dcdcaa">drawImageCenterY</span><span style="color:#d4d4d4">(</span><span style="color:#9cdcfe">image</span><span style="color:#d4d4d4">,</span> <span style="color:#9cdcfe">x</span><span style="color:#d4d4d4">,</span> <span style="color:#9cdcfe">y</span><span style="color:#d4d4d4">,</span> <span style="color:#9cdcfe">width</span><span style="color:#d4d4d4">,</span> <span style="color:#9cdcfe">height</span><span style="color:#d4d4d4">)</span> <span style="color:#d4d4d4">{</span></div><div class="t" style="left:18.5px;top:619.2px;font-size:7.2px;color:#ffffff;">4</div><div class="t" style="left:35px;top:619.2px;font-size:7.2px;color:#ffffff;">0</div><div class="t" style="left:713.6px;top:619.2px;font-size:7.2px;color:#ffffff;">Ln 2, Col 1</div><div class="t" style="left:756.6px;top:619.2px;font-size:7.2px;color:#ffffff;">Spaces: 4</div><div class="t" style="left:797.6px;top:619.2px;font-size:7.2px;color:#ffffff;">UTF-8</div><div class="t" style="left:827.8px;top:619.2px;font-size:7.2px;color:#ffffff;">LF</div><div class="t" style="left:846.3px;top:619.2px;font-size:7.2px;color:#ffffff;">{ }</div><div class="t" style="left:857.0px;top:619.2px;font-size:7.2px;color:#ffffff;">JavaScript</div><div class="t" style="left:910px;top:619.2px;font-size:7.2px;color:#ffffff;">Go Live</div><div class="t" style="left:954px;top:619.2px;font-size:7.2px;color:#ffffff;">Spell</div></div>
</body></html>
